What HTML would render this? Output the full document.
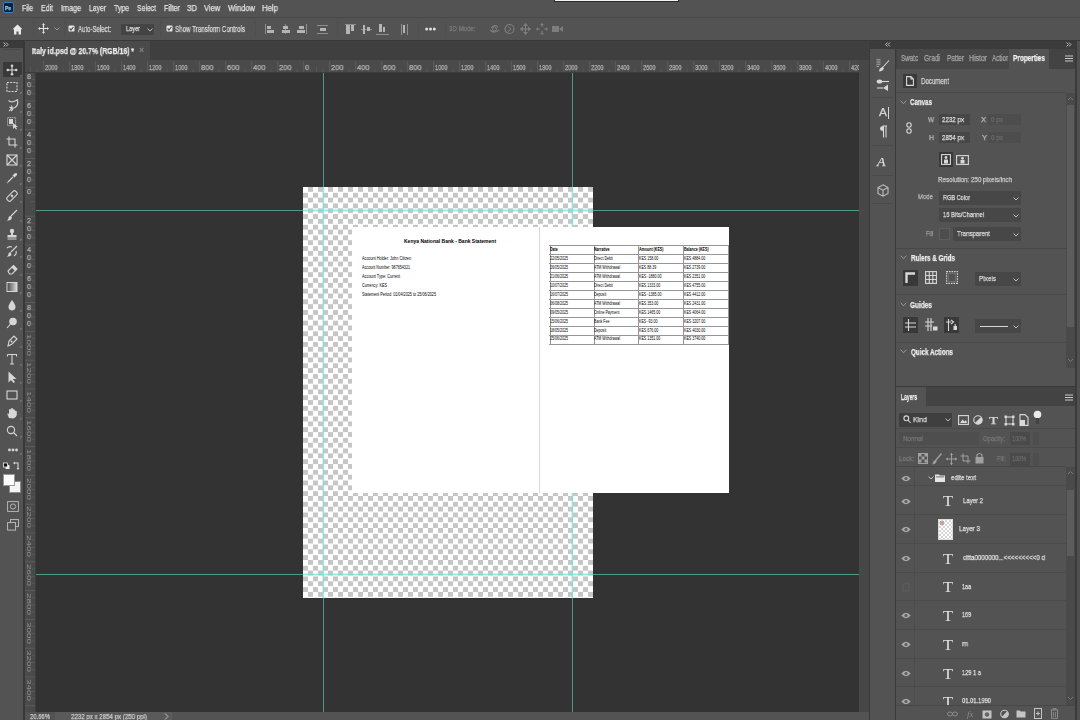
<!DOCTYPE html>
<html><head><meta charset="utf-8"><title>Photoshop</title>
<style>
*{margin:0;padding:0;box-sizing:border-box}
html,body{width:1080px;height:720px;overflow:hidden;background:#535353;font-family:"Liberation Sans",sans-serif}
.a{position:absolute}
.t{position:absolute;white-space:pre;will-change:transform;-webkit-text-stroke:0.25px currentColor}

</style></head><body>
<div class="a" style="left:0px;top:0px;width:1080px;height:17px;background:#535353;"></div>
<div class="a" style="left:0px;top:17px;width:1080px;height:1px;background:#474747;"></div>
<div class="a" style="left:3px;top:2px;width:11px;height:11px;background:#0b2235;border:1px solid #3b7fb0;border-radius:2px"></div>
<div class="t" style="left:5px;top:4.91px;font-size:6px;line-height:6px;color:#8fd0ff;font-weight:700;font-family:'Liberation Sans',sans-serif;transform:scale(0.817,1.000);transform-origin:0 0;">Ps</div>
<div class="t" style="left:22px;top:4.20px;font-size:8.5px;line-height:8.5px;color:#e2e2e2;font-weight:400;font-family:'Liberation Sans',sans-serif;transform:scale(0.803,1.000);transform-origin:0 0;">File</div>
<div class="t" style="left:41px;top:4.20px;font-size:8.5px;line-height:8.5px;color:#e2e2e2;font-weight:400;font-family:'Liberation Sans',sans-serif;transform:scale(0.819,1.000);transform-origin:0 0;">Edit</div>
<div class="t" style="left:61px;top:4.20px;font-size:8.5px;line-height:8.5px;color:#e2e2e2;font-weight:400;font-family:'Liberation Sans',sans-serif;transform:scale(0.847,1.000);transform-origin:0 0;">Image</div>
<div class="t" style="left:89px;top:4.20px;font-size:8.5px;line-height:8.5px;color:#e2e2e2;font-weight:400;font-family:'Liberation Sans',sans-serif;transform:scale(0.799,1.000);transform-origin:0 0;">Layer</div>
<div class="t" style="left:114px;top:4.20px;font-size:8.5px;line-height:8.5px;color:#e2e2e2;font-weight:400;font-family:'Liberation Sans',sans-serif;transform:scale(0.814,1.000);transform-origin:0 0;">Type</div>
<div class="t" style="left:137px;top:4.20px;font-size:8.5px;line-height:8.5px;color:#e2e2e2;font-weight:400;font-family:'Liberation Sans',sans-serif;transform:scale(0.804,1.000);transform-origin:0 0;">Select</div>
<div class="t" style="left:164px;top:4.20px;font-size:8.5px;line-height:8.5px;color:#e2e2e2;font-weight:400;font-family:'Liberation Sans',sans-serif;transform:scale(0.847,1.000);transform-origin:0 0;">Filter</div>
<div class="t" style="left:187px;top:4.20px;font-size:8.5px;line-height:8.5px;color:#e2e2e2;font-weight:400;font-family:'Liberation Sans',sans-serif;transform:scale(0.920,1.000);transform-origin:0 0;">3D</div>
<div class="t" style="left:204px;top:4.20px;font-size:8.5px;line-height:8.5px;color:#e2e2e2;font-weight:400;font-family:'Liberation Sans',sans-serif;transform:scale(0.875,1.000);transform-origin:0 0;">View</div>
<div class="t" style="left:228px;top:4.20px;font-size:8.5px;line-height:8.5px;color:#e2e2e2;font-weight:400;font-family:'Liberation Sans',sans-serif;transform:scale(0.893,1.000);transform-origin:0 0;">Window</div>
<div class="t" style="left:262px;top:4.20px;font-size:8.5px;line-height:8.5px;color:#e2e2e2;font-weight:400;font-family:'Liberation Sans',sans-serif;transform:scale(0.915,1.000);transform-origin:0 0;">Help</div>
<div class="a" style="left:554px;top:-2px;width:125px;height:4px;background:#f2f2f2;border:1px solid #2a2a2a"></div>
<div class="a" style="left:0px;top:18px;width:1080px;height:22px;background:#535353;"></div>
<div class="a" style="left:0px;top:40px;width:1080px;height:1px;background:#383838;"></div>
<svg class="a" style="left:12px;top:24px;" width="11" height="11" viewBox="0 0 11 11"><path d="M5.5 0.5 L0.5 5.2 H2 V10.5 H4.5 V7.5 H6.5 V10.5 H9 V5.2 H10.5 Z" fill="#e8e8e8"/></svg>
<div class="a" style="left:33px;top:21px;width:1px;height:16px;background:#4f4f4f;"></div>
<div class="a" style="left:64px;top:21px;width:1px;height:16px;background:#4f4f4f;"></div>
<div class="a" style="left:160px;top:21px;width:1px;height:16px;background:#4f4f4f;"></div>
<div class="a" style="left:255px;top:21px;width:1px;height:16px;background:#4f4f4f;"></div>
<div class="a" style="left:337px;top:21px;width:1px;height:16px;background:#4f4f4f;"></div>
<div class="a" style="left:418px;top:21px;width:1px;height:16px;background:#4f4f4f;"></div>
<div class="a" style="left:445px;top:21px;width:1px;height:16px;background:#4f4f4f;"></div>
<svg class="a" style="left:38px;top:23px;" width="11" height="11" viewBox="0 0 11 11"><g stroke="#e0e0e0" stroke-width="1.2" fill="#e0e0e0"><path d="M5.5 1 V10 M1 5.5 H10" fill="none"/><path d="M5.5 0 L4 2 H7Z M5.5 11 L4 9 H7Z M0 5.5 L2 4 V7Z M11 5.5 L9 4 V7Z" stroke="none"/></g></svg>
<svg class="a" style="left:54px;top:27px;" width="6" height="4" viewBox="0 0 6 4"><path d="M0.5 0.5 L3 3 L5.5 0.5" stroke="#9a9a9a" fill="none" stroke-width="1"/></svg>
<svg class="a" style="left:68px;top:25px;" width="7" height="7" viewBox="0 0 7 7"><rect x="0.5" y="0.5" width="6" height="6" rx="1" fill="#e6e6e6"/><path d="M1.6 3.5 L3 5 L5.4 2" stroke="#535353" stroke-width="1.2" fill="none"/></svg>
<div class="t" style="left:78px;top:24.70px;font-size:8.5px;line-height:8.5px;color:#dcdcdc;font-weight:400;font-family:'Liberation Sans',sans-serif;transform:scale(0.713,1.000);transform-origin:0 0;">Auto-Select:</div>
<div class="a" style="left:121px;top:24px;width:33px;height:11px;background:#444444;"></div>
<div class="t" style="left:126px;top:25.44px;font-size:8px;line-height:8px;color:#e0e0e0;font-weight:400;font-family:'Liberation Sans',sans-serif;transform:scale(0.699,1.000);transform-origin:0 0;">Layer</div>
<svg class="a" style="left:147px;top:28px;" width="6" height="4" viewBox="0 0 6 4"><path d="M0.5 0.5 L3 3 L5.5 0.5" stroke="#bdbdbd" fill="none" stroke-width="1"/></svg>
<svg class="a" style="left:166px;top:25px;" width="7" height="7" viewBox="0 0 7 7"><rect x="0.5" y="0.5" width="6" height="6" rx="1" fill="#e6e6e6"/><path d="M1.6 3.5 L3 5 L5.4 2" stroke="#535353" stroke-width="1.2" fill="none"/></svg>
<div class="t" style="left:175px;top:24.90px;font-size:8.5px;line-height:8.5px;color:#dcdcdc;font-weight:400;font-family:'Liberation Sans',sans-serif;transform:scale(0.730,1.000);transform-origin:0 0;">Show Transform Controls</div>
<div class="a" style="left:265px;top:24px;width:1px;height:10px;background:#8e8e8e;"></div>
<div class="a" style="left:266.5px;top:26px;width:4.5px;height:3px;background:#b4b4b4;"></div>
<div class="a" style="left:266.5px;top:30px;width:7px;height:2.5px;background:#b4b4b4;"></div>
<div class="a" style="left:285px;top:24px;width:1px;height:10px;background:#8e8e8e;"></div>
<div class="a" style="left:283px;top:26px;width:5px;height:3px;background:#b4b4b4;"></div>
<div class="a" style="left:282px;top:30px;width:7.5px;height:2.5px;background:#b4b4b4;"></div>
<div class="a" style="left:305.5px;top:24px;width:1px;height:10px;background:#8e8e8e;"></div>
<div class="a" style="left:299px;top:26px;width:5px;height:3px;background:#b4b4b4;"></div>
<div class="a" style="left:297px;top:30px;width:7.5px;height:2.5px;background:#b4b4b4;"></div>
<div class="a" style="left:317px;top:25px;width:11px;height:1px;background:#8e8e8e;"></div>
<div class="a" style="left:320px;top:28px;width:6px;height:3px;background:#b4b4b4;"></div>
<div class="a" style="left:317px;top:32.5px;width:11px;height:1px;background:#8e8e8e;"></div>
<div class="a" style="left:345px;top:24px;width:11px;height:1px;background:#8e8e8e;"></div>
<div class="a" style="left:346px;top:24.5px;width:3.5px;height:9.5px;background:#b4b4b4;"></div>
<div class="a" style="left:350.5px;top:24.5px;width:3px;height:6px;background:#b4b4b4;"></div>
<div class="a" style="left:361px;top:29px;width:11px;height:1px;background:#8e8e8e;"></div>
<div class="a" style="left:362.5px;top:25px;width:2.5px;height:8.5px;background:#b4b4b4;"></div>
<div class="a" style="left:366.5px;top:27px;width:3px;height:4px;background:#b4b4b4;"></div>
<div class="a" style="left:376px;top:33.5px;width:13px;height:1px;background:#8e8e8e;"></div>
<div class="a" style="left:379px;top:24px;width:2.5px;height:8px;background:#b4b4b4;"></div>
<div class="a" style="left:382.5px;top:26.5px;width:2.5px;height:5.5px;background:#b4b4b4;"></div>
<div class="a" style="left:400.5px;top:24px;width:1px;height:11px;background:#8e8e8e;"></div>
<div class="a" style="left:406.5px;top:24px;width:1px;height:11px;background:#8e8e8e;"></div>
<div class="a" style="left:402.5px;top:25px;width:2.5px;height:8px;background:#b4b4b4;"></div>
<svg class="a" style="left:425px;top:27px;" width="11" height="4" viewBox="0 0 11 4"><circle cx="1.7" cy="2" r="1.5" fill="#e0e0e0"/><circle cx="5.5" cy="2" r="1.5" fill="#e0e0e0"/><circle cx="9.3" cy="2" r="1.5" fill="#e0e0e0"/></svg>
<div class="t" style="left:449px;top:25.14px;font-size:8px;line-height:8px;color:#7e7e7e;font-weight:400;font-family:'Liberation Sans',sans-serif;transform:scale(0.764,1.000);transform-origin:0 0;">3D Mode:</div>
<svg class="a" style="left:489px;top:23px;" width="11" height="12" viewBox="0 0 11 12"><path d="M2 5 Q5 1 9 4 M1 7 Q5 11 10 7" stroke="#7d7d7d" fill="none" stroke-width="1.2"/><circle cx="5.5" cy="6" r="2" stroke="#7d7d7d" fill="none"/></svg>
<svg class="a" style="left:504px;top:23px;" width="11" height="12" viewBox="0 0 11 12"><circle cx="5.5" cy="6" r="4.5" stroke="#7d7d7d" fill="none" stroke-width="1.2"/><path d="M4 3.5 L7 6 L4 8.5" stroke="#7d7d7d" fill="none"/></svg>
<svg class="a" style="left:520px;top:23px;" width="11" height="12" viewBox="0 0 11 12"><path d="M5.5 0.5 V11.5 M0 6 H11" stroke="#7d7d7d" stroke-width="1.2"/><path d="M5.5 0 L3 3 H8Z M5.5 12 L3 9 H8Z M0 6 L3 3.5 V8.5Z M11 6 L8 3.5 V8.5Z" fill="#7d7d7d"/></svg>
<svg class="a" style="left:536px;top:23px;" width="12" height="12" viewBox="0 0 12 12"><path d="M6 2 V4 M6 8 V10 M2 6 H4 M8 6 H10" stroke="#7d7d7d" stroke-width="1.2"/><path d="M6 0 L4 2 H8Z M6 12 L4 10 H8Z M0 6 L2 4 V8Z M12 6 L10 4 V8Z" fill="#7d7d7d"/></svg>
<svg class="a" style="left:552px;top:24px;" width="12" height="10" viewBox="0 0 12 10"><rect x="0" y="2" width="7" height="6" fill="#7d7d7d"/><path d="M7 5 L11 2 V8Z" fill="#7d7d7d"/></svg>
<div class="a" style="left:23px;top:41px;width:847px;height:19px;background:#3f3f3f;"></div>
<div class="a" style="left:25px;top:41px;width:125px;height:19px;background:#4a4a4a;"></div>
<div class="t" style="left:32px;top:46.70px;font-size:8.5px;line-height:8.5px;color:#ededed;font-weight:700;font-family:'Liberation Sans',sans-serif;transform:scale(0.810,1.000);transform-origin:0 0;">Italy id.psd @ 20.7% (RGB/16) *</div>
<div class="t" style="left:139px;top:46.46px;font-size:9px;line-height:9px;color:#8a8a8a;font-weight:400;font-family:'Liberation Sans',sans-serif;transform:scale(0.950,1.000);transform-origin:0 0;">×</div>
<div class="a" style="left:25px;top:60px;width:834px;height:13px;background:#4a4a4a;"></div>
<div class="a" style="left:25px;top:73px;width:11px;height:639px;background:#4a4a4a;"></div>
<div class="a" style="left:36px;top:73px;width:823px;height:639px;background:#333333;"></div>
<div class="a" style="left:859px;top:60px;width:10px;height:652px;background:#474747;"></div>
<div class="a" style="left:869px;top:60px;width:1px;height:660px;background:#3c3c3c;"></div>
<div class="a" style="left:25px;top:712px;width:845px;height:8px;background:#535353;"></div>
<div class="a" style="left:23px;top:41px;width:2px;height:679px;background:#383838;"></div>
<div class="a" style="left:25px;top:72px;width:834px;height:1px;background:#3c3c3c;"></div>
<div class="a" style="left:35px;top:73px;width:1px;height:639px;background:#3c3c3c;"></div>
<svg class="a" style="left:25px;top:60px;" width="834" height="12" viewBox="0 0 834 12"><rect x="5.3" y="7" width="0.7" height="5" fill="#5c5c5c"/><rect x="11.8" y="9" width="0.7" height="3" fill="#5c5c5c"/><rect x="18.3" y="1" width="0.8" height="11" fill="#606060"/><rect x="24.8" y="9" width="0.7" height="3" fill="#5c5c5c"/><rect x="31.3" y="7" width="0.7" height="5" fill="#5c5c5c"/><rect x="37.8" y="9" width="0.7" height="3" fill="#5c5c5c"/><rect x="44.3" y="1" width="0.8" height="11" fill="#606060"/><rect x="50.8" y="9" width="0.7" height="3" fill="#5c5c5c"/><rect x="57.3" y="7" width="0.7" height="5" fill="#5c5c5c"/><rect x="63.8" y="9" width="0.7" height="3" fill="#5c5c5c"/><rect x="70.3" y="1" width="0.8" height="11" fill="#606060"/><rect x="76.8" y="9" width="0.7" height="3" fill="#5c5c5c"/><rect x="83.3" y="7" width="0.7" height="5" fill="#5c5c5c"/><rect x="89.8" y="9" width="0.7" height="3" fill="#5c5c5c"/><rect x="96.3" y="1" width="0.8" height="11" fill="#606060"/><rect x="102.8" y="9" width="0.7" height="3" fill="#5c5c5c"/><rect x="109.3" y="7" width="0.7" height="5" fill="#5c5c5c"/><rect x="115.8" y="9" width="0.7" height="3" fill="#5c5c5c"/><rect x="122.3" y="1" width="0.8" height="11" fill="#606060"/><rect x="128.8" y="9" width="0.7" height="3" fill="#5c5c5c"/><rect x="135.3" y="7" width="0.7" height="5" fill="#5c5c5c"/><rect x="141.8" y="9" width="0.7" height="3" fill="#5c5c5c"/><rect x="148.3" y="1" width="0.8" height="11" fill="#606060"/><rect x="154.8" y="9" width="0.7" height="3" fill="#5c5c5c"/><rect x="161.3" y="7" width="0.7" height="5" fill="#5c5c5c"/><rect x="167.8" y="9" width="0.7" height="3" fill="#5c5c5c"/><rect x="174.3" y="1" width="0.8" height="11" fill="#606060"/><rect x="180.8" y="9" width="0.7" height="3" fill="#5c5c5c"/><rect x="187.3" y="7" width="0.7" height="5" fill="#5c5c5c"/><rect x="193.8" y="9" width="0.7" height="3" fill="#5c5c5c"/><rect x="200.3" y="1" width="0.8" height="11" fill="#606060"/><rect x="206.8" y="9" width="0.7" height="3" fill="#5c5c5c"/><rect x="213.3" y="7" width="0.7" height="5" fill="#5c5c5c"/><rect x="219.8" y="9" width="0.7" height="3" fill="#5c5c5c"/><rect x="226.3" y="1" width="0.8" height="11" fill="#606060"/><rect x="232.8" y="9" width="0.7" height="3" fill="#5c5c5c"/><rect x="239.3" y="7" width="0.7" height="5" fill="#5c5c5c"/><rect x="245.8" y="9" width="0.7" height="3" fill="#5c5c5c"/><rect x="252.3" y="1" width="0.8" height="11" fill="#606060"/><rect x="258.8" y="9" width="0.7" height="3" fill="#5c5c5c"/><rect x="265.3" y="7" width="0.7" height="5" fill="#5c5c5c"/><rect x="271.8" y="9" width="0.7" height="3" fill="#5c5c5c"/><rect x="278.3" y="1" width="0.8" height="11" fill="#606060"/><rect x="284.8" y="9" width="0.7" height="3" fill="#5c5c5c"/><rect x="291.3" y="7" width="0.7" height="5" fill="#5c5c5c"/><rect x="297.8" y="9" width="0.7" height="3" fill="#5c5c5c"/><rect x="304.3" y="1" width="0.8" height="11" fill="#606060"/><rect x="310.8" y="9" width="0.7" height="3" fill="#5c5c5c"/><rect x="317.3" y="7" width="0.7" height="5" fill="#5c5c5c"/><rect x="323.8" y="9" width="0.7" height="3" fill="#5c5c5c"/><rect x="330.3" y="1" width="0.8" height="11" fill="#606060"/><rect x="336.8" y="9" width="0.7" height="3" fill="#5c5c5c"/><rect x="343.3" y="7" width="0.7" height="5" fill="#5c5c5c"/><rect x="349.8" y="9" width="0.7" height="3" fill="#5c5c5c"/><rect x="356.3" y="1" width="0.8" height="11" fill="#606060"/><rect x="362.8" y="9" width="0.7" height="3" fill="#5c5c5c"/><rect x="369.3" y="7" width="0.7" height="5" fill="#5c5c5c"/><rect x="375.8" y="9" width="0.7" height="3" fill="#5c5c5c"/><rect x="382.3" y="1" width="0.8" height="11" fill="#606060"/><rect x="388.8" y="9" width="0.7" height="3" fill="#5c5c5c"/><rect x="395.3" y="7" width="0.7" height="5" fill="#5c5c5c"/><rect x="401.8" y="9" width="0.7" height="3" fill="#5c5c5c"/><rect x="408.3" y="1" width="0.8" height="11" fill="#606060"/><rect x="414.8" y="9" width="0.7" height="3" fill="#5c5c5c"/><rect x="421.3" y="7" width="0.7" height="5" fill="#5c5c5c"/><rect x="427.8" y="9" width="0.7" height="3" fill="#5c5c5c"/><rect x="434.3" y="1" width="0.8" height="11" fill="#606060"/><rect x="440.8" y="9" width="0.7" height="3" fill="#5c5c5c"/><rect x="447.3" y="7" width="0.7" height="5" fill="#5c5c5c"/><rect x="453.8" y="9" width="0.7" height="3" fill="#5c5c5c"/><rect x="460.3" y="1" width="0.8" height="11" fill="#606060"/><rect x="466.8" y="9" width="0.7" height="3" fill="#5c5c5c"/><rect x="473.3" y="7" width="0.7" height="5" fill="#5c5c5c"/><rect x="479.8" y="9" width="0.7" height="3" fill="#5c5c5c"/><rect x="486.3" y="1" width="0.8" height="11" fill="#606060"/><rect x="492.8" y="9" width="0.7" height="3" fill="#5c5c5c"/><rect x="499.3" y="7" width="0.7" height="5" fill="#5c5c5c"/><rect x="505.8" y="9" width="0.7" height="3" fill="#5c5c5c"/><rect x="512.3" y="1" width="0.8" height="11" fill="#606060"/><rect x="518.8" y="9" width="0.7" height="3" fill="#5c5c5c"/><rect x="525.3" y="7" width="0.7" height="5" fill="#5c5c5c"/><rect x="531.8" y="9" width="0.7" height="3" fill="#5c5c5c"/><rect x="538.3" y="1" width="0.8" height="11" fill="#606060"/><rect x="544.8" y="9" width="0.7" height="3" fill="#5c5c5c"/><rect x="551.3" y="7" width="0.7" height="5" fill="#5c5c5c"/><rect x="557.8" y="9" width="0.7" height="3" fill="#5c5c5c"/><rect x="564.3" y="1" width="0.8" height="11" fill="#606060"/><rect x="570.8" y="9" width="0.7" height="3" fill="#5c5c5c"/><rect x="577.3" y="7" width="0.7" height="5" fill="#5c5c5c"/><rect x="583.8" y="9" width="0.7" height="3" fill="#5c5c5c"/><rect x="590.3" y="1" width="0.8" height="11" fill="#606060"/><rect x="596.8" y="9" width="0.7" height="3" fill="#5c5c5c"/><rect x="603.3" y="7" width="0.7" height="5" fill="#5c5c5c"/><rect x="609.8" y="9" width="0.7" height="3" fill="#5c5c5c"/><rect x="616.3" y="1" width="0.8" height="11" fill="#606060"/><rect x="622.8" y="9" width="0.7" height="3" fill="#5c5c5c"/><rect x="629.3" y="7" width="0.7" height="5" fill="#5c5c5c"/><rect x="635.8" y="9" width="0.7" height="3" fill="#5c5c5c"/><rect x="642.3" y="1" width="0.8" height="11" fill="#606060"/><rect x="648.8" y="9" width="0.7" height="3" fill="#5c5c5c"/><rect x="655.3" y="7" width="0.7" height="5" fill="#5c5c5c"/><rect x="661.8" y="9" width="0.7" height="3" fill="#5c5c5c"/><rect x="668.3" y="1" width="0.8" height="11" fill="#606060"/><rect x="674.8" y="9" width="0.7" height="3" fill="#5c5c5c"/><rect x="681.3" y="7" width="0.7" height="5" fill="#5c5c5c"/><rect x="687.8" y="9" width="0.7" height="3" fill="#5c5c5c"/><rect x="694.3" y="1" width="0.8" height="11" fill="#606060"/><rect x="700.8" y="9" width="0.7" height="3" fill="#5c5c5c"/><rect x="707.3" y="7" width="0.7" height="5" fill="#5c5c5c"/><rect x="713.8" y="9" width="0.7" height="3" fill="#5c5c5c"/><rect x="720.3" y="1" width="0.8" height="11" fill="#606060"/><rect x="726.8" y="9" width="0.7" height="3" fill="#5c5c5c"/><rect x="733.3" y="7" width="0.7" height="5" fill="#5c5c5c"/><rect x="739.8" y="9" width="0.7" height="3" fill="#5c5c5c"/><rect x="746.3" y="1" width="0.8" height="11" fill="#606060"/><rect x="752.8" y="9" width="0.7" height="3" fill="#5c5c5c"/><rect x="759.3" y="7" width="0.7" height="5" fill="#5c5c5c"/><rect x="765.8" y="9" width="0.7" height="3" fill="#5c5c5c"/><rect x="772.3" y="1" width="0.8" height="11" fill="#606060"/><rect x="778.8" y="9" width="0.7" height="3" fill="#5c5c5c"/><rect x="785.3" y="7" width="0.7" height="5" fill="#5c5c5c"/><rect x="791.8" y="9" width="0.7" height="3" fill="#5c5c5c"/><rect x="798.3" y="1" width="0.8" height="11" fill="#606060"/><rect x="804.8" y="9" width="0.7" height="3" fill="#5c5c5c"/><rect x="811.3" y="7" width="0.7" height="5" fill="#5c5c5c"/><rect x="817.8" y="9" width="0.7" height="3" fill="#5c5c5c"/><rect x="824.3" y="1" width="0.8" height="11" fill="#606060"/><rect x="830.8" y="9" width="0.7" height="3" fill="#5c5c5c"/></svg>
<div class="t" style="left:44.500000000000014px;top:63.94px;font-size:8px;line-height:8px;color:#b4b4b4;font-weight:400;font-family:'Liberation Sans',sans-serif;transform:scale(0.702,1.000);transform-origin:0 0;">2000</div>
<div class="t" style="left:70.50000000000001px;top:63.94px;font-size:8px;line-height:8px;color:#b4b4b4;font-weight:400;font-family:'Liberation Sans',sans-serif;transform:scale(0.702,1.000);transform-origin:0 0;">1800</div>
<div class="t" style="left:96.50000000000001px;top:63.94px;font-size:8px;line-height:8px;color:#b4b4b4;font-weight:400;font-family:'Liberation Sans',sans-serif;transform:scale(0.702,1.000);transform-origin:0 0;">1600</div>
<div class="t" style="left:122.50000000000001px;top:63.94px;font-size:8px;line-height:8px;color:#b4b4b4;font-weight:400;font-family:'Liberation Sans',sans-serif;transform:scale(0.702,1.000);transform-origin:0 0;">1400</div>
<div class="t" style="left:148.5px;top:63.94px;font-size:8px;line-height:8px;color:#b4b4b4;font-weight:400;font-family:'Liberation Sans',sans-serif;transform:scale(0.702,1.000);transform-origin:0 0;">1200</div>
<div class="t" style="left:174.5px;top:63.94px;font-size:8px;line-height:8px;color:#b4b4b4;font-weight:400;font-family:'Liberation Sans',sans-serif;transform:scale(0.702,1.000);transform-origin:0 0;">1000</div>
<div class="t" style="left:200.5px;top:63.94px;font-size:8px;line-height:8px;color:#b4b4b4;font-weight:400;font-family:'Liberation Sans',sans-serif;transform:scale(0.936,1.000);transform-origin:0 0;">800</div>
<div class="t" style="left:226.5px;top:63.94px;font-size:8px;line-height:8px;color:#b4b4b4;font-weight:400;font-family:'Liberation Sans',sans-serif;transform:scale(0.936,1.000);transform-origin:0 0;">600</div>
<div class="t" style="left:252.5px;top:63.94px;font-size:8px;line-height:8px;color:#b4b4b4;font-weight:400;font-family:'Liberation Sans',sans-serif;transform:scale(0.936,1.000);transform-origin:0 0;">400</div>
<div class="t" style="left:278.5px;top:63.94px;font-size:8px;line-height:8px;color:#b4b4b4;font-weight:400;font-family:'Liberation Sans',sans-serif;transform:scale(0.936,1.000);transform-origin:0 0;">200</div>
<div class="t" style="left:304.5px;top:63.94px;font-size:8px;line-height:8px;color:#b4b4b4;font-weight:400;font-family:'Liberation Sans',sans-serif;transform:scale(0.898,1.000);transform-origin:0 0;">0</div>
<div class="t" style="left:330.5px;top:63.94px;font-size:8px;line-height:8px;color:#b4b4b4;font-weight:400;font-family:'Liberation Sans',sans-serif;transform:scale(0.936,1.000);transform-origin:0 0;">200</div>
<div class="t" style="left:356.5px;top:63.94px;font-size:8px;line-height:8px;color:#b4b4b4;font-weight:400;font-family:'Liberation Sans',sans-serif;transform:scale(0.936,1.000);transform-origin:0 0;">400</div>
<div class="t" style="left:382.5px;top:63.94px;font-size:8px;line-height:8px;color:#b4b4b4;font-weight:400;font-family:'Liberation Sans',sans-serif;transform:scale(0.936,1.000);transform-origin:0 0;">600</div>
<div class="t" style="left:408.5px;top:63.94px;font-size:8px;line-height:8px;color:#b4b4b4;font-weight:400;font-family:'Liberation Sans',sans-serif;transform:scale(0.936,1.000);transform-origin:0 0;">800</div>
<div class="t" style="left:434.5px;top:63.94px;font-size:8px;line-height:8px;color:#b4b4b4;font-weight:400;font-family:'Liberation Sans',sans-serif;transform:scale(0.702,1.000);transform-origin:0 0;">1000</div>
<div class="t" style="left:460.5px;top:63.94px;font-size:8px;line-height:8px;color:#b4b4b4;font-weight:400;font-family:'Liberation Sans',sans-serif;transform:scale(0.702,1.000);transform-origin:0 0;">1200</div>
<div class="t" style="left:486.5px;top:63.94px;font-size:8px;line-height:8px;color:#b4b4b4;font-weight:400;font-family:'Liberation Sans',sans-serif;transform:scale(0.702,1.000);transform-origin:0 0;">1400</div>
<div class="t" style="left:512.5px;top:63.94px;font-size:8px;line-height:8px;color:#b4b4b4;font-weight:400;font-family:'Liberation Sans',sans-serif;transform:scale(0.702,1.000);transform-origin:0 0;">1600</div>
<div class="t" style="left:538.5px;top:63.94px;font-size:8px;line-height:8px;color:#b4b4b4;font-weight:400;font-family:'Liberation Sans',sans-serif;transform:scale(0.702,1.000);transform-origin:0 0;">1800</div>
<div class="t" style="left:564.5px;top:63.94px;font-size:8px;line-height:8px;color:#b4b4b4;font-weight:400;font-family:'Liberation Sans',sans-serif;transform:scale(0.702,1.000);transform-origin:0 0;">2000</div>
<div class="t" style="left:590.5px;top:63.94px;font-size:8px;line-height:8px;color:#b4b4b4;font-weight:400;font-family:'Liberation Sans',sans-serif;transform:scale(0.702,1.000);transform-origin:0 0;">2200</div>
<div class="t" style="left:616.5px;top:63.94px;font-size:8px;line-height:8px;color:#b4b4b4;font-weight:400;font-family:'Liberation Sans',sans-serif;transform:scale(0.702,1.000);transform-origin:0 0;">2400</div>
<div class="t" style="left:642.5px;top:63.94px;font-size:8px;line-height:8px;color:#b4b4b4;font-weight:400;font-family:'Liberation Sans',sans-serif;transform:scale(0.702,1.000);transform-origin:0 0;">2600</div>
<div class="t" style="left:668.5px;top:63.94px;font-size:8px;line-height:8px;color:#b4b4b4;font-weight:400;font-family:'Liberation Sans',sans-serif;transform:scale(0.702,1.000);transform-origin:0 0;">2800</div>
<div class="t" style="left:694.5px;top:63.94px;font-size:8px;line-height:8px;color:#b4b4b4;font-weight:400;font-family:'Liberation Sans',sans-serif;transform:scale(0.702,1.000);transform-origin:0 0;">3000</div>
<div class="t" style="left:720.5px;top:63.94px;font-size:8px;line-height:8px;color:#b4b4b4;font-weight:400;font-family:'Liberation Sans',sans-serif;transform:scale(0.702,1.000);transform-origin:0 0;">3200</div>
<div class="t" style="left:746.5px;top:63.94px;font-size:8px;line-height:8px;color:#b4b4b4;font-weight:400;font-family:'Liberation Sans',sans-serif;transform:scale(0.702,1.000);transform-origin:0 0;">3400</div>
<div class="t" style="left:772.5px;top:63.94px;font-size:8px;line-height:8px;color:#b4b4b4;font-weight:400;font-family:'Liberation Sans',sans-serif;transform:scale(0.702,1.000);transform-origin:0 0;">3600</div>
<div class="t" style="left:798.5px;top:63.94px;font-size:8px;line-height:8px;color:#b4b4b4;font-weight:400;font-family:'Liberation Sans',sans-serif;transform:scale(0.702,1.000);transform-origin:0 0;">3800</div>
<div class="t" style="left:824.5px;top:63.94px;font-size:8px;line-height:8px;color:#b4b4b4;font-weight:400;font-family:'Liberation Sans',sans-serif;transform:scale(0.702,1.000);transform-origin:0 0;">4000</div>
<div class="t" style="left:850.5px;top:63.94px;font-size:8px;line-height:8px;color:#b4b4b4;font-weight:400;font-family:'Liberation Sans',sans-serif;transform:scale(0.702,1.000);transform-origin:0 0;">4200</div>
<div class="a" style="left:859px;top:60px;width:10px;height:13px;background:#474747;"></div>
<svg class="a" style="left:25px;top:73px;" width="10" height="639" viewBox="0 0 10 639"><rect x="7" y="6.0" width="3" height="0.7" fill="#5c5c5c"/><rect x="5" y="13.2" width="5" height="0.7" fill="#5c5c5c"/><rect x="7" y="20.4" width="3" height="0.7" fill="#5c5c5c"/><rect x="0" y="27.6" width="10" height="0.8" fill="#606060"/><rect x="7" y="34.8" width="3" height="0.7" fill="#5c5c5c"/><rect x="5" y="42.0" width="5" height="0.7" fill="#5c5c5c"/><rect x="7" y="49.2" width="3" height="0.7" fill="#5c5c5c"/><rect x="0" y="56.4" width="10" height="0.8" fill="#606060"/><rect x="7" y="63.6" width="3" height="0.7" fill="#5c5c5c"/><rect x="5" y="70.8" width="5" height="0.7" fill="#5c5c5c"/><rect x="7" y="78.0" width="3" height="0.7" fill="#5c5c5c"/><rect x="0" y="85.2" width="10" height="0.8" fill="#606060"/><rect x="7" y="92.4" width="3" height="0.7" fill="#5c5c5c"/><rect x="5" y="99.6" width="5" height="0.7" fill="#5c5c5c"/><rect x="7" y="106.8" width="3" height="0.7" fill="#5c5c5c"/><rect x="0" y="114.0" width="10" height="0.8" fill="#606060"/><rect x="7" y="121.2" width="3" height="0.7" fill="#5c5c5c"/><rect x="5" y="128.4" width="5" height="0.7" fill="#5c5c5c"/><rect x="7" y="135.6" width="3" height="0.7" fill="#5c5c5c"/><rect x="0" y="142.8" width="10" height="0.8" fill="#606060"/><rect x="7" y="150.0" width="3" height="0.7" fill="#5c5c5c"/><rect x="5" y="157.2" width="5" height="0.7" fill="#5c5c5c"/><rect x="7" y="164.4" width="3" height="0.7" fill="#5c5c5c"/><rect x="0" y="171.6" width="10" height="0.8" fill="#606060"/><rect x="7" y="178.8" width="3" height="0.7" fill="#5c5c5c"/><rect x="5" y="186.0" width="5" height="0.7" fill="#5c5c5c"/><rect x="7" y="193.2" width="3" height="0.7" fill="#5c5c5c"/><rect x="0" y="200.4" width="10" height="0.8" fill="#606060"/><rect x="7" y="207.6" width="3" height="0.7" fill="#5c5c5c"/><rect x="5" y="214.8" width="5" height="0.7" fill="#5c5c5c"/><rect x="7" y="222.0" width="3" height="0.7" fill="#5c5c5c"/><rect x="0" y="229.2" width="10" height="0.8" fill="#606060"/><rect x="7" y="236.4" width="3" height="0.7" fill="#5c5c5c"/><rect x="5" y="243.6" width="5" height="0.7" fill="#5c5c5c"/><rect x="7" y="250.8" width="3" height="0.7" fill="#5c5c5c"/><rect x="0" y="258.0" width="10" height="0.8" fill="#606060"/><rect x="7" y="265.2" width="3" height="0.7" fill="#5c5c5c"/><rect x="5" y="272.4" width="5" height="0.7" fill="#5c5c5c"/><rect x="7" y="279.6" width="3" height="0.7" fill="#5c5c5c"/><rect x="0" y="286.8" width="10" height="0.8" fill="#606060"/><rect x="7" y="294.0" width="3" height="0.7" fill="#5c5c5c"/><rect x="5" y="301.2" width="5" height="0.7" fill="#5c5c5c"/><rect x="7" y="308.4" width="3" height="0.7" fill="#5c5c5c"/><rect x="0" y="315.6" width="10" height="0.8" fill="#606060"/><rect x="7" y="322.8" width="3" height="0.7" fill="#5c5c5c"/><rect x="5" y="330.0" width="5" height="0.7" fill="#5c5c5c"/><rect x="7" y="337.2" width="3" height="0.7" fill="#5c5c5c"/><rect x="0" y="344.4" width="10" height="0.8" fill="#606060"/><rect x="7" y="351.6" width="3" height="0.7" fill="#5c5c5c"/><rect x="5" y="358.8" width="5" height="0.7" fill="#5c5c5c"/><rect x="7" y="366.0" width="3" height="0.7" fill="#5c5c5c"/><rect x="0" y="373.2" width="10" height="0.8" fill="#606060"/><rect x="7" y="380.4" width="3" height="0.7" fill="#5c5c5c"/><rect x="5" y="387.6" width="5" height="0.7" fill="#5c5c5c"/><rect x="7" y="394.8" width="3" height="0.7" fill="#5c5c5c"/><rect x="0" y="402.0" width="10" height="0.8" fill="#606060"/><rect x="7" y="409.2" width="3" height="0.7" fill="#5c5c5c"/><rect x="5" y="416.4" width="5" height="0.7" fill="#5c5c5c"/><rect x="7" y="423.6" width="3" height="0.7" fill="#5c5c5c"/><rect x="0" y="430.8" width="10" height="0.8" fill="#606060"/><rect x="7" y="438.0" width="3" height="0.7" fill="#5c5c5c"/><rect x="5" y="445.2" width="5" height="0.7" fill="#5c5c5c"/><rect x="7" y="452.4" width="3" height="0.7" fill="#5c5c5c"/><rect x="0" y="459.6" width="10" height="0.8" fill="#606060"/><rect x="7" y="466.8" width="3" height="0.7" fill="#5c5c5c"/><rect x="5" y="474.0" width="5" height="0.7" fill="#5c5c5c"/><rect x="7" y="481.2" width="3" height="0.7" fill="#5c5c5c"/><rect x="0" y="488.4" width="10" height="0.8" fill="#606060"/><rect x="7" y="495.6" width="3" height="0.7" fill="#5c5c5c"/><rect x="5" y="502.8" width="5" height="0.7" fill="#5c5c5c"/><rect x="7" y="510.0" width="3" height="0.7" fill="#5c5c5c"/><rect x="0" y="517.2" width="10" height="0.8" fill="#606060"/><rect x="7" y="524.4" width="3" height="0.7" fill="#5c5c5c"/><rect x="5" y="531.6" width="5" height="0.7" fill="#5c5c5c"/><rect x="7" y="538.8" width="3" height="0.7" fill="#5c5c5c"/><rect x="0" y="546.0" width="10" height="0.8" fill="#606060"/><rect x="7" y="553.2" width="3" height="0.7" fill="#5c5c5c"/><rect x="5" y="560.4" width="5" height="0.7" fill="#5c5c5c"/><rect x="7" y="567.6" width="3" height="0.7" fill="#5c5c5c"/><rect x="0" y="574.8" width="10" height="0.8" fill="#606060"/><rect x="7" y="582.0" width="3" height="0.7" fill="#5c5c5c"/><rect x="5" y="589.2" width="5" height="0.7" fill="#5c5c5c"/><rect x="7" y="596.4" width="3" height="0.7" fill="#5c5c5c"/><rect x="0" y="603.6" width="10" height="0.8" fill="#606060"/><rect x="7" y="610.8" width="3" height="0.7" fill="#5c5c5c"/><rect x="5" y="618.0" width="5" height="0.7" fill="#5c5c5c"/><rect x="7" y="625.2" width="3" height="0.7" fill="#5c5c5c"/><rect x="0" y="632.4" width="10" height="0.8" fill="#606060"/></svg>
<div class="t" style="left:26.7px;top:73.24px;font-size:8px;line-height:8px;color:#b0b0b0;font-weight:400;font-family:'Liberation Sans',sans-serif;transform:scale(0.898,1.000);transform-origin:0 0;">8</div>
<div class="t" style="left:26.7px;top:81.24px;font-size:8px;line-height:8px;color:#b0b0b0;font-weight:400;font-family:'Liberation Sans',sans-serif;transform:scale(0.898,1.000);transform-origin:0 0;">0</div>
<div class="t" style="left:26.7px;top:89.24px;font-size:8px;line-height:8px;color:#b0b0b0;font-weight:400;font-family:'Liberation Sans',sans-serif;transform:scale(0.898,1.000);transform-origin:0 0;">0</div>
<div class="t" style="left:26.7px;top:102.04px;font-size:8px;line-height:8px;color:#b0b0b0;font-weight:400;font-family:'Liberation Sans',sans-serif;transform:scale(0.898,1.000);transform-origin:0 0;">6</div>
<div class="t" style="left:26.7px;top:110.04px;font-size:8px;line-height:8px;color:#b0b0b0;font-weight:400;font-family:'Liberation Sans',sans-serif;transform:scale(0.898,1.000);transform-origin:0 0;">0</div>
<div class="t" style="left:26.7px;top:118.04px;font-size:8px;line-height:8px;color:#b0b0b0;font-weight:400;font-family:'Liberation Sans',sans-serif;transform:scale(0.898,1.000);transform-origin:0 0;">0</div>
<div class="t" style="left:26.7px;top:130.84px;font-size:8px;line-height:8px;color:#b0b0b0;font-weight:400;font-family:'Liberation Sans',sans-serif;transform:scale(0.898,1.000);transform-origin:0 0;">4</div>
<div class="t" style="left:26.7px;top:138.84px;font-size:8px;line-height:8px;color:#b0b0b0;font-weight:400;font-family:'Liberation Sans',sans-serif;transform:scale(0.898,1.000);transform-origin:0 0;">0</div>
<div class="t" style="left:26.7px;top:146.84px;font-size:8px;line-height:8px;color:#b0b0b0;font-weight:400;font-family:'Liberation Sans',sans-serif;transform:scale(0.898,1.000);transform-origin:0 0;">0</div>
<div class="t" style="left:26.7px;top:159.64px;font-size:8px;line-height:8px;color:#b0b0b0;font-weight:400;font-family:'Liberation Sans',sans-serif;transform:scale(0.898,1.000);transform-origin:0 0;">2</div>
<div class="t" style="left:26.7px;top:167.64px;font-size:8px;line-height:8px;color:#b0b0b0;font-weight:400;font-family:'Liberation Sans',sans-serif;transform:scale(0.898,1.000);transform-origin:0 0;">0</div>
<div class="t" style="left:26.7px;top:175.64px;font-size:8px;line-height:8px;color:#b0b0b0;font-weight:400;font-family:'Liberation Sans',sans-serif;transform:scale(0.898,1.000);transform-origin:0 0;">0</div>
<div class="t" style="left:26.7px;top:188.44px;font-size:8px;line-height:8px;color:#b0b0b0;font-weight:400;font-family:'Liberation Sans',sans-serif;transform:scale(0.898,1.000);transform-origin:0 0;">0</div>
<div class="t" style="left:26.7px;top:217.24px;font-size:8px;line-height:8px;color:#b0b0b0;font-weight:400;font-family:'Liberation Sans',sans-serif;transform:scale(0.898,1.000);transform-origin:0 0;">2</div>
<div class="t" style="left:26.7px;top:225.24px;font-size:8px;line-height:8px;color:#b0b0b0;font-weight:400;font-family:'Liberation Sans',sans-serif;transform:scale(0.898,1.000);transform-origin:0 0;">0</div>
<div class="t" style="left:26.7px;top:233.24px;font-size:8px;line-height:8px;color:#b0b0b0;font-weight:400;font-family:'Liberation Sans',sans-serif;transform:scale(0.898,1.000);transform-origin:0 0;">0</div>
<div class="t" style="left:26.7px;top:246.04px;font-size:8px;line-height:8px;color:#b0b0b0;font-weight:400;font-family:'Liberation Sans',sans-serif;transform:scale(0.898,1.000);transform-origin:0 0;">4</div>
<div class="t" style="left:26.7px;top:254.04px;font-size:8px;line-height:8px;color:#b0b0b0;font-weight:400;font-family:'Liberation Sans',sans-serif;transform:scale(0.898,1.000);transform-origin:0 0;">0</div>
<div class="t" style="left:26.7px;top:262.04px;font-size:8px;line-height:8px;color:#b0b0b0;font-weight:400;font-family:'Liberation Sans',sans-serif;transform:scale(0.898,1.000);transform-origin:0 0;">0</div>
<div class="t" style="left:26.7px;top:274.84px;font-size:8px;line-height:8px;color:#b0b0b0;font-weight:400;font-family:'Liberation Sans',sans-serif;transform:scale(0.898,1.000);transform-origin:0 0;">6</div>
<div class="t" style="left:26.7px;top:282.84px;font-size:8px;line-height:8px;color:#b0b0b0;font-weight:400;font-family:'Liberation Sans',sans-serif;transform:scale(0.898,1.000);transform-origin:0 0;">0</div>
<div class="t" style="left:26.7px;top:290.84px;font-size:8px;line-height:8px;color:#b0b0b0;font-weight:400;font-family:'Liberation Sans',sans-serif;transform:scale(0.898,1.000);transform-origin:0 0;">0</div>
<div class="t" style="left:26.7px;top:303.64px;font-size:8px;line-height:8px;color:#b0b0b0;font-weight:400;font-family:'Liberation Sans',sans-serif;transform:scale(0.898,1.000);transform-origin:0 0;">8</div>
<div class="t" style="left:26.7px;top:311.64px;font-size:8px;line-height:8px;color:#b0b0b0;font-weight:400;font-family:'Liberation Sans',sans-serif;transform:scale(0.898,1.000);transform-origin:0 0;">0</div>
<div class="t" style="left:26.7px;top:319.64px;font-size:8px;line-height:8px;color:#b0b0b0;font-weight:400;font-family:'Liberation Sans',sans-serif;transform:scale(0.898,1.000);transform-origin:0 0;">0</div>
<div class="t" style="left:31.0px;top:333.5px;font-size:5.2px;line-height:5.2px;color:#8e8e8e;-webkit-text-stroke:0;transform-origin:0 0;transform:rotate(90deg) scaleX(1.9)">1000</div>
<div class="t" style="left:31.0px;top:362.3px;font-size:5.2px;line-height:5.2px;color:#8e8e8e;-webkit-text-stroke:0;transform-origin:0 0;transform:rotate(90deg) scaleX(1.9)">1200</div>
<div class="t" style="left:31.0px;top:391.1px;font-size:5.2px;line-height:5.2px;color:#8e8e8e;-webkit-text-stroke:0;transform-origin:0 0;transform:rotate(90deg) scaleX(1.9)">1400</div>
<div class="t" style="left:31.0px;top:419.9px;font-size:5.2px;line-height:5.2px;color:#8e8e8e;-webkit-text-stroke:0;transform-origin:0 0;transform:rotate(90deg) scaleX(1.9)">1600</div>
<div class="t" style="left:31.0px;top:448.7px;font-size:5.2px;line-height:5.2px;color:#8e8e8e;-webkit-text-stroke:0;transform-origin:0 0;transform:rotate(90deg) scaleX(1.9)">1800</div>
<div class="t" style="left:31.0px;top:477.5px;font-size:5.2px;line-height:5.2px;color:#8e8e8e;-webkit-text-stroke:0;transform-origin:0 0;transform:rotate(90deg) scaleX(1.9)">2000</div>
<div class="t" style="left:31.0px;top:506.3px;font-size:5.2px;line-height:5.2px;color:#8e8e8e;-webkit-text-stroke:0;transform-origin:0 0;transform:rotate(90deg) scaleX(1.9)">2200</div>
<div class="t" style="left:31.0px;top:535.1px;font-size:5.2px;line-height:5.2px;color:#8e8e8e;-webkit-text-stroke:0;transform-origin:0 0;transform:rotate(90deg) scaleX(1.9)">2400</div>
<div class="t" style="left:31.0px;top:563.9px;font-size:5.2px;line-height:5.2px;color:#8e8e8e;-webkit-text-stroke:0;transform-origin:0 0;transform:rotate(90deg) scaleX(1.9)">2600</div>
<div class="t" style="left:31.0px;top:592.7px;font-size:5.2px;line-height:5.2px;color:#8e8e8e;-webkit-text-stroke:0;transform-origin:0 0;transform:rotate(90deg) scaleX(1.9)">2800</div>
<div class="t" style="left:31.0px;top:621.5px;font-size:5.2px;line-height:5.2px;color:#8e8e8e;-webkit-text-stroke:0;transform-origin:0 0;transform:rotate(90deg) scaleX(1.9)">3000</div>
<div class="t" style="left:31.0px;top:650.3px;font-size:5.2px;line-height:5.2px;color:#8e8e8e;-webkit-text-stroke:0;transform-origin:0 0;transform:rotate(90deg) scaleX(1.9)">3200</div>
<div class="t" style="left:31.0px;top:679.1px;font-size:5.2px;line-height:5.2px;color:#8e8e8e;-webkit-text-stroke:0;transform-origin:0 0;transform:rotate(90deg) scaleX(1.9)">3400</div>
<div class="a" style="left:303px;top:187px;width:290px;height:411px;background:conic-gradient(#c6c6c6 0 25%,#fff 0 50%,#c6c6c6 0 75%,#fff 0) 0 0/10px 10.66px"></div>
<div class="a" style="left:322.6px;top:73px;width:1.3px;height:639px;background:rgba(95,220,205,0.6);"></div>
<div class="a" style="left:571.6px;top:73px;width:1.3px;height:639px;background:rgba(95,220,205,0.6);"></div>
<div class="a" style="left:36px;top:210.1px;width:823px;height:1.3px;background:rgba(95,220,205,0.6);"></div>
<div class="a" style="left:36px;top:573.7px;width:823px;height:1.3px;background:rgba(95,220,205,0.6);"></div>
<div class="a" style="left:303px;top:209.4px;width:290px;height:2.6px;background:rgba(120,235,225,0.35);"></div>
<div class="a" style="left:303px;top:573.0px;width:290px;height:2.6px;background:rgba(120,235,225,0.35);"></div>
<div class="a" style="left:321.9px;top:187px;width:2.6px;height:411px;background:rgba(120,235,225,0.35);"></div>
<div class="a" style="left:570.9px;top:187px;width:2.6px;height:411px;background:rgba(120,235,225,0.35);"></div>
<div class="a" style="left:352px;top:227px;width:377px;height:266px;background:#ffffff;"></div>
<div class="a" style="left:539px;top:227px;width:1px;height:266px;background:#d9d9d9;"></div>
<div class="t" style="left:404px;top:238.03px;font-size:11px;line-height:11px;color:#000;font-weight:700;font-family:'Liberation Sans',sans-serif;transform:scale(0.455,0.560);transform-origin:0 0;-webkit-text-stroke:0;will-change:auto;">Kenya National Bank - Bank Statement</div>
<div class="t" style="left:362px;top:256.19px;font-size:5px;line-height:5px;color:#000;font-weight:400;font-family:'Liberation Sans',sans-serif;transform:scale(0.760,1.000);transform-origin:0 0;-webkit-text-stroke:0;will-change:auto;">Account Holder: John Citizen</div>
<div class="t" style="left:362px;top:265.04px;font-size:5px;line-height:5px;color:#000;font-weight:400;font-family:'Liberation Sans',sans-serif;transform:scale(0.738,1.000);transform-origin:0 0;-webkit-text-stroke:0;will-change:auto;">Account Number: 987654321</div>
<div class="t" style="left:362px;top:273.89px;font-size:5px;line-height:5px;color:#000;font-weight:400;font-family:'Liberation Sans',sans-serif;transform:scale(0.765,1.000);transform-origin:0 0;-webkit-text-stroke:0;will-change:auto;">Account Type: Current</div>
<div class="t" style="left:362px;top:282.74px;font-size:5px;line-height:5px;color:#000;font-weight:400;font-family:'Liberation Sans',sans-serif;transform:scale(0.756,1.000);transform-origin:0 0;-webkit-text-stroke:0;will-change:auto;">Currency: KES</div>
<div class="t" style="left:362px;top:291.59px;font-size:5px;line-height:5px;color:#000;font-weight:400;font-family:'Liberation Sans',sans-serif;transform:scale(0.752,1.000);transform-origin:0 0;-webkit-text-stroke:0;will-change:auto;">Statement Period: 01/04/2025 to 25/06/2025</div>
<svg class="a" style="left:549px;top:245px;" width="181" height="100" viewBox="0 0 181 100"><rect x="0" y="0" width="180" height="1" fill="#969696"/><rect x="0" y="9" width="180" height="1" fill="#969696"/><rect x="0" y="18" width="180" height="1" fill="#969696"/><rect x="0" y="27" width="180" height="1" fill="#969696"/><rect x="0" y="36" width="180" height="1" fill="#969696"/><rect x="0" y="45" width="180" height="1" fill="#969696"/><rect x="0" y="54" width="180" height="1" fill="#969696"/><rect x="0" y="63" width="180" height="1" fill="#969696"/><rect x="0" y="72" width="180" height="1" fill="#969696"/><rect x="0" y="81" width="180" height="1" fill="#969696"/><rect x="0" y="90" width="180" height="1" fill="#969696"/><rect x="0" y="99" width="180" height="1" fill="#969696"/><rect x="1" y="0" width="1" height="99" fill="#969696"/><rect x="45" y="0" width="1" height="99" fill="#969696"/><rect x="89" y="0" width="1" height="99" fill="#969696"/><rect x="134" y="0" width="1" height="99" fill="#969696"/><rect x="179" y="0" width="1" height="99" fill="#969696"/></svg>
<div class="t" style="left:550.3px;top:248.15px;font-size:4.8px;line-height:4.8px;color:#000;font-weight:700;font-family:'Liberation Sans',sans-serif;transform:scale(0.750,1.000);transform-origin:0 0;-webkit-text-stroke:0;will-change:auto;">Date</div>
<div class="t" style="left:594.4px;top:248.15px;font-size:4.8px;line-height:4.8px;color:#000;font-weight:700;font-family:'Liberation Sans',sans-serif;transform:scale(0.750,1.000);transform-origin:0 0;-webkit-text-stroke:0;will-change:auto;">Narrative</div>
<div class="t" style="left:639.1999999999999px;top:248.15px;font-size:4.8px;line-height:4.8px;color:#000;font-weight:700;font-family:'Liberation Sans',sans-serif;transform:scale(0.750,1.000);transform-origin:0 0;-webkit-text-stroke:0;will-change:auto;">Amount (KES)</div>
<div class="t" style="left:683.5px;top:248.15px;font-size:4.8px;line-height:4.8px;color:#000;font-weight:700;font-family:'Liberation Sans',sans-serif;transform:scale(0.750,1.000);transform-origin:0 0;-webkit-text-stroke:0;will-change:auto;">Balance (KES)</div>
<div class="t" style="left:550.3px;top:257.08px;font-size:4.8px;line-height:4.8px;color:#000;font-weight:400;font-family:'Liberation Sans',sans-serif;transform:scale(0.750,1.000);transform-origin:0 0;-webkit-text-stroke:0;will-change:auto;">22/05/2025</div>
<div class="t" style="left:594.4px;top:257.08px;font-size:4.8px;line-height:4.8px;color:#000;font-weight:400;font-family:'Liberation Sans',sans-serif;transform:scale(0.750,1.000);transform-origin:0 0;-webkit-text-stroke:0;will-change:auto;">Direct Debit</div>
<div class="t" style="left:639.1999999999999px;top:257.08px;font-size:4.8px;line-height:4.8px;color:#000;font-weight:400;font-family:'Liberation Sans',sans-serif;transform:scale(0.750,1.000);transform-origin:0 0;-webkit-text-stroke:0;will-change:auto;">KES 158.00</div>
<div class="t" style="left:683.5px;top:257.08px;font-size:4.8px;line-height:4.8px;color:#000;font-weight:400;font-family:'Liberation Sans',sans-serif;transform:scale(0.750,1.000);transform-origin:0 0;-webkit-text-stroke:0;will-change:auto;">KES 4884.00</div>
<div class="t" style="left:550.3px;top:266.01px;font-size:4.8px;line-height:4.8px;color:#000;font-weight:400;font-family:'Liberation Sans',sans-serif;transform:scale(0.750,1.000);transform-origin:0 0;-webkit-text-stroke:0;will-change:auto;">26/05/2025</div>
<div class="t" style="left:594.4px;top:266.01px;font-size:4.8px;line-height:4.8px;color:#000;font-weight:400;font-family:'Liberation Sans',sans-serif;transform:scale(0.750,1.000);transform-origin:0 0;-webkit-text-stroke:0;will-change:auto;">ATM Withdrawal</div>
<div class="t" style="left:639.1999999999999px;top:266.01px;font-size:4.8px;line-height:4.8px;color:#000;font-weight:400;font-family:'Liberation Sans',sans-serif;transform:scale(0.750,1.000);transform-origin:0 0;-webkit-text-stroke:0;will-change:auto;">KES 88.39</div>
<div class="t" style="left:683.5px;top:266.01px;font-size:4.8px;line-height:4.8px;color:#000;font-weight:400;font-family:'Liberation Sans',sans-serif;transform:scale(0.750,1.000);transform-origin:0 0;-webkit-text-stroke:0;will-change:auto;">KES 2739.00</div>
<div class="t" style="left:550.3px;top:274.94px;font-size:4.8px;line-height:4.8px;color:#000;font-weight:400;font-family:'Liberation Sans',sans-serif;transform:scale(0.750,1.000);transform-origin:0 0;-webkit-text-stroke:0;will-change:auto;">21/06/2025</div>
<div class="t" style="left:594.4px;top:274.94px;font-size:4.8px;line-height:4.8px;color:#000;font-weight:400;font-family:'Liberation Sans',sans-serif;transform:scale(0.750,1.000);transform-origin:0 0;-webkit-text-stroke:0;will-change:auto;">ATM Withdrawal</div>
<div class="t" style="left:639.1999999999999px;top:274.94px;font-size:4.8px;line-height:4.8px;color:#000;font-weight:400;font-family:'Liberation Sans',sans-serif;transform:scale(0.750,1.000);transform-origin:0 0;-webkit-text-stroke:0;will-change:auto;">KES -1880.00</div>
<div class="t" style="left:683.5px;top:274.94px;font-size:4.8px;line-height:4.8px;color:#000;font-weight:400;font-family:'Liberation Sans',sans-serif;transform:scale(0.750,1.000);transform-origin:0 0;-webkit-text-stroke:0;will-change:auto;">KES 2351.00</div>
<div class="t" style="left:550.3px;top:283.87px;font-size:4.8px;line-height:4.8px;color:#000;font-weight:400;font-family:'Liberation Sans',sans-serif;transform:scale(0.750,1.000);transform-origin:0 0;-webkit-text-stroke:0;will-change:auto;">10/07/2025</div>
<div class="t" style="left:594.4px;top:283.87px;font-size:4.8px;line-height:4.8px;color:#000;font-weight:400;font-family:'Liberation Sans',sans-serif;transform:scale(0.750,1.000);transform-origin:0 0;-webkit-text-stroke:0;will-change:auto;">Direct Debit</div>
<div class="t" style="left:639.1999999999999px;top:283.87px;font-size:4.8px;line-height:4.8px;color:#000;font-weight:400;font-family:'Liberation Sans',sans-serif;transform:scale(0.750,1.000);transform-origin:0 0;-webkit-text-stroke:0;will-change:auto;">KES 1333.00</div>
<div class="t" style="left:683.5px;top:283.87px;font-size:4.8px;line-height:4.8px;color:#000;font-weight:400;font-family:'Liberation Sans',sans-serif;transform:scale(0.750,1.000);transform-origin:0 0;-webkit-text-stroke:0;will-change:auto;">KES 4755.00</div>
<div class="t" style="left:550.3px;top:292.80px;font-size:4.8px;line-height:4.8px;color:#000;font-weight:400;font-family:'Liberation Sans',sans-serif;transform:scale(0.750,1.000);transform-origin:0 0;-webkit-text-stroke:0;will-change:auto;">16/07/2025</div>
<div class="t" style="left:594.4px;top:292.80px;font-size:4.8px;line-height:4.8px;color:#000;font-weight:400;font-family:'Liberation Sans',sans-serif;transform:scale(0.750,1.000);transform-origin:0 0;-webkit-text-stroke:0;will-change:auto;">Deposit</div>
<div class="t" style="left:639.1999999999999px;top:292.80px;font-size:4.8px;line-height:4.8px;color:#000;font-weight:400;font-family:'Liberation Sans',sans-serif;transform:scale(0.750,1.000);transform-origin:0 0;-webkit-text-stroke:0;will-change:auto;">KES -1385.00</div>
<div class="t" style="left:683.5px;top:292.80px;font-size:4.8px;line-height:4.8px;color:#000;font-weight:400;font-family:'Liberation Sans',sans-serif;transform:scale(0.750,1.000);transform-origin:0 0;-webkit-text-stroke:0;will-change:auto;">KES 4412.00</div>
<div class="t" style="left:550.3px;top:301.73px;font-size:4.8px;line-height:4.8px;color:#000;font-weight:400;font-family:'Liberation Sans',sans-serif;transform:scale(0.750,1.000);transform-origin:0 0;-webkit-text-stroke:0;will-change:auto;">06/08/2025</div>
<div class="t" style="left:594.4px;top:301.73px;font-size:4.8px;line-height:4.8px;color:#000;font-weight:400;font-family:'Liberation Sans',sans-serif;transform:scale(0.750,1.000);transform-origin:0 0;-webkit-text-stroke:0;will-change:auto;">ATM Withdrawal</div>
<div class="t" style="left:639.1999999999999px;top:301.73px;font-size:4.8px;line-height:4.8px;color:#000;font-weight:400;font-family:'Liberation Sans',sans-serif;transform:scale(0.750,1.000);transform-origin:0 0;-webkit-text-stroke:0;will-change:auto;">KES 353.00</div>
<div class="t" style="left:683.5px;top:301.73px;font-size:4.8px;line-height:4.8px;color:#000;font-weight:400;font-family:'Liberation Sans',sans-serif;transform:scale(0.750,1.000);transform-origin:0 0;-webkit-text-stroke:0;will-change:auto;">KES 2431.00</div>
<div class="t" style="left:550.3px;top:310.66px;font-size:4.8px;line-height:4.8px;color:#000;font-weight:400;font-family:'Liberation Sans',sans-serif;transform:scale(0.750,1.000);transform-origin:0 0;-webkit-text-stroke:0;will-change:auto;">09/05/2025</div>
<div class="t" style="left:594.4px;top:310.66px;font-size:4.8px;line-height:4.8px;color:#000;font-weight:400;font-family:'Liberation Sans',sans-serif;transform:scale(0.750,1.000);transform-origin:0 0;-webkit-text-stroke:0;will-change:auto;">Online Payment</div>
<div class="t" style="left:639.1999999999999px;top:310.66px;font-size:4.8px;line-height:4.8px;color:#000;font-weight:400;font-family:'Liberation Sans',sans-serif;transform:scale(0.750,1.000);transform-origin:0 0;-webkit-text-stroke:0;will-change:auto;">KES 1465.00</div>
<div class="t" style="left:683.5px;top:310.66px;font-size:4.8px;line-height:4.8px;color:#000;font-weight:400;font-family:'Liberation Sans',sans-serif;transform:scale(0.750,1.000);transform-origin:0 0;-webkit-text-stroke:0;will-change:auto;">KES 4064.00</div>
<div class="t" style="left:550.3px;top:319.59px;font-size:4.8px;line-height:4.8px;color:#000;font-weight:400;font-family:'Liberation Sans',sans-serif;transform:scale(0.750,1.000);transform-origin:0 0;-webkit-text-stroke:0;will-change:auto;">15/06/2025</div>
<div class="t" style="left:594.4px;top:319.59px;font-size:4.8px;line-height:4.8px;color:#000;font-weight:400;font-family:'Liberation Sans',sans-serif;transform:scale(0.750,1.000);transform-origin:0 0;-webkit-text-stroke:0;will-change:auto;">Bank Fee</div>
<div class="t" style="left:639.1999999999999px;top:319.59px;font-size:4.8px;line-height:4.8px;color:#000;font-weight:400;font-family:'Liberation Sans',sans-serif;transform:scale(0.750,1.000);transform-origin:0 0;-webkit-text-stroke:0;will-change:auto;">KES -93.00</div>
<div class="t" style="left:683.5px;top:319.59px;font-size:4.8px;line-height:4.8px;color:#000;font-weight:400;font-family:'Liberation Sans',sans-serif;transform:scale(0.750,1.000);transform-origin:0 0;-webkit-text-stroke:0;will-change:auto;">KES 3207.00</div>
<div class="t" style="left:550.3px;top:328.52px;font-size:4.8px;line-height:4.8px;color:#000;font-weight:400;font-family:'Liberation Sans',sans-serif;transform:scale(0.750,1.000);transform-origin:0 0;-webkit-text-stroke:0;will-change:auto;">18/05/2025</div>
<div class="t" style="left:594.4px;top:328.52px;font-size:4.8px;line-height:4.8px;color:#000;font-weight:400;font-family:'Liberation Sans',sans-serif;transform:scale(0.750,1.000);transform-origin:0 0;-webkit-text-stroke:0;will-change:auto;">Deposit</div>
<div class="t" style="left:639.1999999999999px;top:328.52px;font-size:4.8px;line-height:4.8px;color:#000;font-weight:400;font-family:'Liberation Sans',sans-serif;transform:scale(0.750,1.000);transform-origin:0 0;-webkit-text-stroke:0;will-change:auto;">KES 676.00</div>
<div class="t" style="left:683.5px;top:328.52px;font-size:4.8px;line-height:4.8px;color:#000;font-weight:400;font-family:'Liberation Sans',sans-serif;transform:scale(0.750,1.000);transform-origin:0 0;-webkit-text-stroke:0;will-change:auto;">KES 4030.00</div>
<div class="t" style="left:550.3px;top:337.45px;font-size:4.8px;line-height:4.8px;color:#000;font-weight:400;font-family:'Liberation Sans',sans-serif;transform:scale(0.750,1.000);transform-origin:0 0;-webkit-text-stroke:0;will-change:auto;">25/06/2025</div>
<div class="t" style="left:594.4px;top:337.45px;font-size:4.8px;line-height:4.8px;color:#000;font-weight:400;font-family:'Liberation Sans',sans-serif;transform:scale(0.750,1.000);transform-origin:0 0;-webkit-text-stroke:0;will-change:auto;">ATM Withdrawal</div>
<div class="t" style="left:639.1999999999999px;top:337.45px;font-size:4.8px;line-height:4.8px;color:#000;font-weight:400;font-family:'Liberation Sans',sans-serif;transform:scale(0.750,1.000);transform-origin:0 0;-webkit-text-stroke:0;will-change:auto;">KES 1351.00</div>
<div class="t" style="left:683.5px;top:337.45px;font-size:4.8px;line-height:4.8px;color:#000;font-weight:400;font-family:'Liberation Sans',sans-serif;transform:scale(0.750,1.000);transform-origin:0 0;-webkit-text-stroke:0;will-change:auto;">KES 3740.00</div>
<div class="t" style="left:30px;top:712.88px;font-size:7.5px;line-height:7.5px;color:#cfcfcf;font-weight:400;font-family:'Liberation Sans',sans-serif;transform:scale(0.786,1.000);transform-origin:0 0;">20.66%</div>
<div class="a" style="left:55px;top:712px;width:117px;height:8px;background:#5a5a5a;"></div>
<div class="t" style="left:71px;top:712.88px;font-size:7.5px;line-height:7.5px;color:#cfcfcf;font-weight:400;font-family:'Liberation Sans',sans-serif;transform:scale(0.817,1.000);transform-origin:0 0;">2232 px x 2854 px (250 ppi)</div>
<svg class="a" style="left:164px;top:713px;" width="5" height="7" viewBox="0 0 5 7"><path d="M1 0.5 L4 3.5 L1 6.5" stroke="#bbb" fill="none"/></svg>
<div class="a" style="left:0px;top:41px;width:23px;height:679px;background:#535353;"></div>
<div class="a" style="left:0px;top:41px;width:23px;height:7px;background:#3b3b3b;"></div>
<svg class="a" style="left:3px;top:42px;" width="6" height="5" viewBox="0 0 6 5"><path d="M0.5 0.5 L2.5 2.5 L0.5 4.5 M3 0.5 L5 2.5 L3 4.5" stroke="#bdbdbd" fill="none" stroke-width="1"/></svg>
<div class="a" style="left:3px;top:49px;width:17px;height:1px;background:#4a4a4a;"></div>
<div class="a" style="left:3px;top:62px;width:19px;height:15px;background:#393939;"></div>
<svg class="a" style="left:6.0px;top:63.5px;" width="12" height="12" viewBox="0 0 12 12"><path d="M6 1.5 V10.5 M1.5 6 H10.5" stroke="#d6d6d6" fill="none" stroke-width="1.1"/><circle cx="6" cy="1.8" r="1.3" fill="#d6d6d6"/><circle cx="6" cy="10.2" r="1.3" fill="#d6d6d6"/><circle cx="1.8" cy="6" r="1.3" fill="#d6d6d6"/><circle cx="10.2" cy="6" r="1.3" fill="#d6d6d6"/></svg>
<svg class="a" style="left:19px;top:73.5px;" width="3" height="3" viewBox="0 0 3 3"><path d="M2.5 0.5 V2.5 H0.5Z" fill="#8a8a8a"/></svg>
<svg class="a" style="left:6.0px;top:81.0px;" width="12" height="12" viewBox="0 0 12 12"><rect x="1" y="1.5" width="10" height="9" stroke="#d6d6d6" fill="none" stroke-width="1.1" stroke-dasharray="2 1.2"/></svg>
<svg class="a" style="left:19px;top:91px;" width="3" height="3" viewBox="0 0 3 3"><path d="M2.5 0.5 V2.5 H0.5Z" fill="#8a8a8a"/></svg>
<svg class="a" style="left:6.800000000000001px;top:99.0px;" width="12" height="13" viewBox="0 0 12 13"><path d="M1.5 1.5 Q5 4.5 10.5 0.8 Q11.5 6.5 8 8.5 Q5 10 2.5 8 M4.5 6.5 Q6 9 2 12 M6 9 Q5.5 11 4 12" stroke="#d6d6d6" fill="none" stroke-width="1.1" stroke-width="1.2"/></svg>
<svg class="a" style="left:19px;top:109.5px;" width="3" height="3" viewBox="0 0 3 3"><path d="M2.5 0.5 V2.5 H0.5Z" fill="#8a8a8a"/></svg>
<svg class="a" style="left:7.300000000000001px;top:117.0px;" width="12" height="13" viewBox="0 0 12 13"><rect x="0.6" y="0.6" width="8" height="8" stroke="#d6d6d6" fill="none" stroke-width="0.8" stroke-dasharray="1.2 0.8"/><rect x="2" y="2" width="4" height="5" fill="#d6d6d6"/><path d="M6 6 L6 12 L7.6 10.5 L9 12.6 L10 12 L8.8 10 L11 10Z" fill="#d6d6d6"/></svg>
<svg class="a" style="left:19px;top:127.5px;" width="3" height="3" viewBox="0 0 3 3"><path d="M2.5 0.5 V2.5 H0.5Z" fill="#8a8a8a"/></svg>
<svg class="a" style="left:6.0px;top:135.5px;" width="12" height="12" viewBox="0 0 12 12"><path d="M3 0.5 V9 H11.5 M0.5 3 H9 V11.5" stroke="#d6d6d6" fill="none" stroke-width="1.1" stroke-width="1.4"/></svg>
<svg class="a" style="left:19px;top:145.5px;" width="3" height="3" viewBox="0 0 3 3"><path d="M2.5 0.5 V2.5 H0.5Z" fill="#8a8a8a"/></svg>
<svg class="a" style="left:6.0px;top:153.5px;" width="12" height="12" viewBox="0 0 12 12"><rect x="1" y="1" width="10" height="10" stroke="#d6d6d6" fill="none" stroke-width="1.1"/><path d="M1 1 L11 11 M11 1 L1 11" stroke="#d6d6d6" fill="none" stroke-width="1.1"/></svg>
<svg class="a" style="left:19px;top:163.5px;" width="3" height="3" viewBox="0 0 3 3"><path d="M2.5 0.5 V2.5 H0.5Z" fill="#8a8a8a"/></svg>
<svg class="a" style="left:6.0px;top:171.5px;" width="12" height="12" viewBox="0 0 12 12"><path d="M2 10 L7 5" stroke="#d6d6d6" fill="none" stroke-width="1.1" stroke-width="1.6"/><path d="M6.5 3.5 L8.5 1.5 Q10 0.5 11 1.5 Q11.5 3 10.5 3.5 L8.5 5.5Z" fill="#d6d6d6"/><path d="M1.5 10.5 L1 11" stroke="#d6d6d6" fill="none" stroke-width="1.1"/></svg>
<svg class="a" style="left:19px;top:181.5px;" width="3" height="3" viewBox="0 0 3 3"><path d="M2.5 0.5 V2.5 H0.5Z" fill="#8a8a8a"/></svg>
<svg class="a" style="left:6.0px;top:189.5px;" width="12" height="12" viewBox="0 0 12 12"><rect x="3.5" y="0" width="5" height="12" rx="2" transform="rotate(45 6 6)" stroke="#d6d6d6" fill="none" stroke-width="1.1" stroke-width="1.3"/><path d="M5 5 L7 7 M7 5 L5 7" stroke="#d6d6d6" fill="none" stroke-width="1.1"/></svg>
<svg class="a" style="left:19px;top:199.5px;" width="3" height="3" viewBox="0 0 3 3"><path d="M2.5 0.5 V2.5 H0.5Z" fill="#8a8a8a"/></svg>
<svg class="a" style="left:6.0px;top:209.0px;" width="12" height="12" viewBox="0 0 12 12"><path d="M11 1 L5 7" stroke="#d6d6d6" fill="none" stroke-width="1.1" stroke-width="1.4"/><path d="M4.5 7 Q2 7.5 2.5 9.5 Q2 11 0.5 11.5 Q4 12 5.5 10 Q6.5 8.5 5 7Z" fill="#d6d6d6"/></svg>
<svg class="a" style="left:19px;top:219px;" width="3" height="3" viewBox="0 0 3 3"><path d="M2.5 0.5 V2.5 H0.5Z" fill="#8a8a8a"/></svg>
<svg class="a" style="left:6.0px;top:227.5px;" width="12" height="12" viewBox="0 0 12 12"><circle cx="6" cy="3" r="2.2" fill="#d6d6d6"/><rect x="5" y="4" width="2" height="3" fill="#d6d6d6"/><rect x="1.5" y="7" width="9" height="2.5" fill="#d6d6d6"/><rect x="1.5" y="10.5" width="9" height="1" fill="#d6d6d6"/></svg>
<svg class="a" style="left:19px;top:237.5px;" width="3" height="3" viewBox="0 0 3 3"><path d="M2.5 0.5 V2.5 H0.5Z" fill="#8a8a8a"/></svg>
<svg class="a" style="left:6.0px;top:245.0px;" width="12" height="12" viewBox="0 0 12 12"><path d="M11 1 L5 7" stroke="#d6d6d6" fill="none" stroke-width="1.1" stroke-width="1.3"/><path d="M4.5 7 Q2 7.5 2.5 9.5 Q2 11 0.5 11.5 Q4 12 5.5 10Z" fill="#d6d6d6"/><path d="M1 3 Q3 1 6 2" stroke="#d6d6d6" fill="none" stroke-width="1.1"/><path d="M8 11 Q11 9 10 6" stroke="#d6d6d6" fill="none" stroke-width="1.1"/></svg>
<svg class="a" style="left:19px;top:255px;" width="3" height="3" viewBox="0 0 3 3"><path d="M2.5 0.5 V2.5 H0.5Z" fill="#8a8a8a"/></svg>
<svg class="a" style="left:6.0px;top:262.5px;" width="12" height="12" viewBox="0 0 12 12"><path d="M2 8 L7.5 2.5 L11 6 L6 11 H3.5Z" stroke="#d6d6d6" fill="none" stroke-width="1.1" stroke-width="1.2"/><path d="M7.5 2.5 L11 6 L9 8 L5.5 4.5Z" fill="#d6d6d6"/></svg>
<svg class="a" style="left:19px;top:272.5px;" width="3" height="3" viewBox="0 0 3 3"><path d="M2.5 0.5 V2.5 H0.5Z" fill="#8a8a8a"/></svg>
<svg class="a" style="left:6.0px;top:280.5px;" width="12" height="12" viewBox="0 0 12 12"><defs><linearGradient id="gg" x1="0" x2="1"><stop offset="0" stop-color="#444"/><stop offset="1" stop-color="#ddd"/></linearGradient></defs><rect x="1" y="1.5" width="10" height="9" fill="url(#gg)" stroke="#d6d6d6" stroke-width="1"/></svg>
<svg class="a" style="left:19px;top:290.5px;" width="3" height="3" viewBox="0 0 3 3"><path d="M2.5 0.5 V2.5 H0.5Z" fill="#8a8a8a"/></svg>
<svg class="a" style="left:6.0px;top:298.5px;" width="12" height="12" viewBox="0 0 12 12"><path d="M6 1 Q10 6.5 9.5 8.5 Q9 11.5 6 11.5 Q3 11.5 2.5 8.5 Q2 6.5 6 1Z" fill="#d6d6d6"/></svg>
<svg class="a" style="left:19px;top:308.5px;" width="3" height="3" viewBox="0 0 3 3"><path d="M2.5 0.5 V2.5 H0.5Z" fill="#8a8a8a"/></svg>
<svg class="a" style="left:6.0px;top:316.5px;" width="12" height="12" viewBox="0 0 12 12"><circle cx="7" cy="4.5" r="3.8" fill="#d6d6d6"/><path d="M4.5 7 L1 11" stroke="#d6d6d6" fill="none" stroke-width="1.1" stroke-width="1.6"/></svg>
<svg class="a" style="left:19px;top:326.5px;" width="3" height="3" viewBox="0 0 3 3"><path d="M2.5 0.5 V2.5 H0.5Z" fill="#8a8a8a"/></svg>
<svg class="a" style="left:6.0px;top:334.5px;" width="12" height="12" viewBox="0 0 12 12"><path d="M2 11 L3 6 L8 1 L11 4 L6 9Z" stroke="#d6d6d6" fill="none" stroke-width="1.1" stroke-width="1.2"/><circle cx="5.5" cy="6.5" r="1" fill="#d6d6d6"/></svg>
<svg class="a" style="left:19px;top:344.5px;" width="3" height="3" viewBox="0 0 3 3"><path d="M2.5 0.5 V2.5 H0.5Z" fill="#8a8a8a"/></svg>
<svg class="a" style="left:6.0px;top:352.5px;" width="12" height="12" viewBox="0 0 12 12"><path d="M1.5 1.5 H10.5 V3.5 M1.5 1.5 V3.5 M6 1.5 V11 M4 11 H8" stroke="#d6d6d6" fill="none" stroke-width="1.1" stroke-width="1.5"/></svg>
<svg class="a" style="left:19px;top:362.5px;" width="3" height="3" viewBox="0 0 3 3"><path d="M2.5 0.5 V2.5 H0.5Z" fill="#8a8a8a"/></svg>
<svg class="a" style="left:6.0px;top:370.5px;" width="12" height="12" viewBox="0 0 12 12"><path d="M2.5 0.5 V11.5 L5 9 L7.5 12 L9 11 L6.8 8 L10.5 8Z" fill="#d6d6d6"/></svg>
<svg class="a" style="left:19px;top:380.5px;" width="3" height="3" viewBox="0 0 3 3"><path d="M2.5 0.5 V2.5 H0.5Z" fill="#8a8a8a"/></svg>
<svg class="a" style="left:6.0px;top:388.5px;" width="12" height="12" viewBox="0 0 12 12"><rect x="1" y="2" width="10" height="8" stroke="#d6d6d6" fill="none" stroke-width="1.1" stroke-width="1.3"/></svg>
<svg class="a" style="left:19px;top:398.5px;" width="3" height="3" viewBox="0 0 3 3"><path d="M2.5 0.5 V2.5 H0.5Z" fill="#8a8a8a"/></svg>
<svg class="a" style="left:6.0px;top:406.5px;" width="12" height="12" viewBox="0 0 12 12"><path d="M3 11 Q1 8 1.5 6 L3 7 V2.5 Q4 1.5 5 2.5 V1.5 Q6 0.5 7 1.5 V2.5 Q8 1.8 9 2.8 V4 Q10 3.5 10.8 4.5 V8 Q10 11 7.5 11.5Z" fill="#d6d6d6"/></svg>
<svg class="a" style="left:19px;top:416.5px;" width="3" height="3" viewBox="0 0 3 3"><path d="M2.5 0.5 V2.5 H0.5Z" fill="#8a8a8a"/></svg>
<svg class="a" style="left:6.0px;top:424.5px;" width="12" height="12" viewBox="0 0 12 12"><circle cx="5" cy="5" r="3.6" stroke="#d6d6d6" fill="none" stroke-width="1.1" stroke-width="1.4"/><path d="M7.5 7.5 L11 11" stroke="#d6d6d6" fill="none" stroke-width="1.1" stroke-width="2"/></svg>
<svg class="a" style="left:19px;top:434.5px;" width="3" height="3" viewBox="0 0 3 3"><path d="M2.5 0.5 V2.5 H0.5Z" fill="#8a8a8a"/></svg>
<svg class="a" style="left:7.5px;top:447.5px;" width="10" height="4" viewBox="0 0 10 4"><circle cx="1.5" cy="2" r="1.4" fill="#d6d6d6"/><circle cx="5" cy="2" r="1.4" fill="#d6d6d6"/><circle cx="8.5" cy="2" r="1.4" fill="#d6d6d6"/></svg>
<svg class="a" style="left:19px;top:452px;" width="3" height="3" viewBox="0 0 3 3"><path d="M2.5 0.5 V2.5 H0.5Z" fill="#8a8a8a"/></svg>
<svg class="a" style="left:3px;top:462px;" width="7" height="8" viewBox="0 0 7 8"><rect x="2.5" y="3" width="4" height="4" fill="#eee"/><rect x="0.5" y="1" width="4" height="4" fill="#111" stroke="#eee" stroke-width="0.8"/></svg>
<svg class="a" style="left:13px;top:461px;" width="7" height="9" viewBox="0 0 7 9"><path d="M1 2 H5 V7" stroke="#d6d6d6" fill="none" stroke-width="1.1"/><path d="M0 2 L2 0.5 V3.5Z M5 9 L3.5 7 H6.5Z" fill="#d6d6d6"/></svg>
<div class="a" style="left:9px;top:480.5px;width:11.5px;height:12.5px;background:#f4f4f4;border:1px solid #8a8a8a"></div>
<div class="a" style="left:3px;top:473.5px;width:11.5px;height:12px;background:#ffffff;border:1px solid #9a9a9a"></div>
<svg class="a" style="left:6.5px;top:500.5px;" width="12" height="11" viewBox="0 0 12 11"><rect x="0.6" y="0.6" width="10.8" height="9.8" stroke="#bdbdbd" fill="none" stroke-width="0.9"/><circle cx="6" cy="5.5" r="2.6" stroke="#bdbdbd" fill="none" stroke-width="0.9"/></svg>
<svg class="a" style="left:6.5px;top:519px;" width="12" height="12" viewBox="0 0 12 12"><rect x="3.5" y="0.6" width="8" height="7" stroke="#c4c4c4" fill="none" stroke-width="0.9"/><rect x="0.6" y="3.6" width="8" height="7.5" fill="#535353" stroke="#c4c4c4" stroke-width="0.9"/></svg>
<div class="a" style="left:869px;top:41px;width:211px;height:8px;background:#3b3b3b;"></div>
<svg class="a" style="left:885px;top:42px;" width="6" height="5" viewBox="0 0 6 5"><path d="M2.5 0.5 L0.5 2.5 L2.5 4.5 M5 0.5 L3 2.5 L5 4.5" stroke="#bdbdbd" fill="none" stroke-width="1"/></svg>
<svg class="a" style="left:1066px;top:42px;" width="6" height="5" viewBox="0 0 6 5"><path d="M0.5 0.5 L2.5 2.5 L0.5 4.5 M3 0.5 L5 2.5 L3 4.5" stroke="#bdbdbd" fill="none" stroke-width="1"/></svg>
<div class="a" style="left:869px;top:49px;width:1px;height:671px;background:#3a3a3a;"></div>
<div class="a" style="left:870px;top:49px;width:25px;height:671px;background:#535353;"></div>
<div class="a" style="left:895px;top:49px;width:1px;height:671px;background:#3a3a3a;"></div>
<div class="a" style="left:872px;top:97px;width:21px;height:1px;background:#4a4a4a;"></div>
<div class="a" style="left:872px;top:145px;width:21px;height:1px;background:#4a4a4a;"></div>
<div class="a" style="left:872px;top:175px;width:21px;height:1px;background:#4a4a4a;"></div>
<div class="a" style="left:872px;top:203px;width:21px;height:1px;background:#4a4a4a;"></div>
<svg class="a" style="left:876px;top:59px;" width="14" height="13" viewBox="0 0 14 13"><path d="M0.5 0.8 H4.5 M0.5 3 H4.5 M0.5 5.2 H4.5 M0.5 7.4 H3" stroke="#d8d8d8" stroke-width="0.7"/><path d="M13 1.5 L7 8" stroke="#d8d8d8" fill="none" stroke-width="1.1" stroke-width="1.6"/><path d="M6.5 7.5 Q3.5 9 3 12.5 Q6.5 12.5 8 9.5Z" fill="#d8d8d8"/></svg>
<svg class="a" style="left:876px;top:79px;" width="14" height="12" viewBox="0 0 14 12"><ellipse cx="3.5" cy="2.5" rx="2.8" ry="2" fill="#d8d8d8"/><path d="M6 2.5 H13" stroke="#d8d8d8" fill="none" stroke-width="1.1" stroke-width="1.3"/><path d="M1 9 H7" stroke="#d8d8d8" fill="none" stroke-width="1.1" stroke-width="1.3"/><path d="M7 9 L12 5.5 V12Z" fill="#d8d8d8"/></svg>
<div class="t" style="left:878.5px;top:107.20px;font-size:11px;line-height:11px;color:#d8d8d8;font-weight:400;font-family:'Liberation Sans',sans-serif;transform:scale(1.089,1.000);transform-origin:0 0;">A</div>
<div class="a" style="left:887.5px;top:106.5px;width:1px;height:12px;background:#d8d8d8;"></div>
<svg class="a" style="left:879px;top:125px;" width="9" height="13" viewBox="0 0 9 13"><path d="M3.5 1 H8 M4.5 1 V12.5 M7 1 V12.5" stroke="#d8d8d8" fill="none" stroke-width="1.1" stroke-width="1.3"/><path d="M4.5 1 Q1 1 1 3.5 Q1 6 4.5 6Z" fill="#d8d8d8"/></svg>
<div class="t" style="left:877px;top:154.73px;font-size:13px;line-height:13px;color:#d8d8d8;font-weight:400;font-family:'Liberation Serif',sans-serif;transform:scale(1.065,1.000);transform-origin:0 0;font-style:italic;">A</div>
<svg class="a" style="left:877px;top:184px;" width="12" height="13" viewBox="0 0 12 13"><path d="M6 0.8 L11 3.5 V9.5 L6 12.2 L1 9.5 V3.5Z M1 3.5 L6 6.2 L11 3.5 M6 6.2 V12.2" stroke="#bdbdbd" fill="none" stroke-width="1.1"/></svg>
<div class="a" style="left:896px;top:49px;width:179px;height:337px;background:#535353;"></div>
<div class="a" style="left:896px;top:49px;width:179px;height:20px;background:#434343;"></div>
<div class="a" style="left:897px;top:49px;width:112px;height:20px;background:#484848;"></div>
<div class="t" style="left:901px;top:54.10px;font-size:8.5px;line-height:8.5px;color:#a9a9a9;font-weight:400;font-family:'Liberation Sans',sans-serif;transform:scale(0.734,1.000);transform-origin:0 0;">Swatc</div>
<div class="t" style="left:924px;top:54.10px;font-size:8.5px;line-height:8.5px;color:#a9a9a9;font-weight:400;font-family:'Liberation Sans',sans-serif;transform:scale(0.769,1.000);transform-origin:0 0;">Gradi</div>
<div class="t" style="left:947px;top:54.10px;font-size:8.5px;line-height:8.5px;color:#a9a9a9;font-weight:400;font-family:'Liberation Sans',sans-serif;transform:scale(0.749,1.000);transform-origin:0 0;">Patter</div>
<div class="t" style="left:969px;top:54.10px;font-size:8.5px;line-height:8.5px;color:#a9a9a9;font-weight:400;font-family:'Liberation Sans',sans-serif;transform:scale(0.811,1.000);transform-origin:0 0;">Histor</div>
<div class="t" style="left:992px;top:54.10px;font-size:8.5px;line-height:8.5px;color:#a9a9a9;font-weight:400;font-family:'Liberation Sans',sans-serif;transform:scale(0.736,1.000);transform-origin:0 0;">Actior</div>
<div class="a" style="left:1009px;top:49px;width:40px;height:20px;background:#535353;"></div>
<div class="t" style="left:1013px;top:54.10px;font-size:8.5px;line-height:8.5px;color:#f0f0f0;font-weight:700;font-family:'Liberation Sans',sans-serif;transform:scale(0.761,1.000);transform-origin:0 0;">Properties</div>
<svg class="a" style="left:1065px;top:55px;" width="8" height="7" viewBox="0 0 8 7"><path d="M0 1 H8 M0 3.5 H8 M0 6 H8" stroke="#c9c9c9" stroke-width="1.2"/></svg>
<div class="a" style="left:903px;top:74px;width:14px;height:14px;background:#3a3a3a;"></div>
<svg class="a" style="left:906px;top:76px;" width="8" height="10" viewBox="0 0 8 10"><path d="M0.6 0.6 H5 L7.4 3 V9.4 H0.6Z M5 0.6 V3 H7.4" stroke="#d8d8d8" fill="none" stroke-width="1.1" stroke-width="1"/></svg>
<div class="t" style="left:921px;top:77.40px;font-size:8.5px;line-height:8.5px;color:#d6d6d6;font-weight:400;font-family:'Liberation Sans',sans-serif;transform:scale(0.723,1.000);transform-origin:0 0;">Document</div>
<div class="a" style="left:896px;top:92px;width:170px;height:1px;background:#484848;"></div>
<div class="a" style="left:1066px;top:93px;width:9px;height:275px;background:#4a4a4a;"></div>
<div class="a" style="left:1067px;top:105px;width:7px;height:222px;background:#5c5c5c;"></div>
<svg class="a" style="left:1067px;top:96px;" width="7" height="5" viewBox="0 0 7 5"><path d="M1 4 L3.5 1.5 L6 4" stroke="#777" fill="none"/></svg>
<svg class="a" style="left:1067px;top:358px;" width="7" height="5" viewBox="0 0 7 5"><path d="M1 1 L3.5 3.5 L6 1" stroke="#777" fill="none"/></svg>
<svg class="a" style="left:900px;top:100px;" width="7" height="5" viewBox="0 0 7 5"><path d="M0.7 0.7 L3.5 3.8 L6.3 0.7" stroke="#9a9a9a" fill="none" stroke-width="1"/></svg>
<div class="t" style="left:910px;top:98.40px;font-size:8.5px;line-height:8.5px;color:#ededed;font-weight:700;font-family:'Liberation Sans',sans-serif;transform:scale(0.727,1.000);transform-origin:0 0;">Canvas</div>
<div class="t" style="left:928px;top:116.14px;font-size:8px;line-height:8px;color:#bdbdbd;font-weight:400;font-family:'Liberation Sans',sans-serif;transform:scale(0.793,1.000);transform-origin:0 0;">W</div>
<div class="a" style="left:939px;top:114px;width:31px;height:11px;background:#474747;"></div>
<div class="t" style="left:942px;top:115.64px;font-size:8px;line-height:8px;color:#e0e0e0;font-weight:400;font-family:'Liberation Sans',sans-serif;transform:scale(0.773,1.000);transform-origin:0 0;">2232 px</div>
<div class="t" style="left:981px;top:116.14px;font-size:8px;line-height:8px;color:#bdbdbd;font-weight:400;font-family:'Liberation Sans',sans-serif;transform:scale(0.936,1.000);transform-origin:0 0;">X</div>
<div class="a" style="left:988px;top:114px;width:33px;height:11px;background:#4d4d4d;"></div>
<div class="t" style="left:991px;top:115.64px;font-size:8px;line-height:8px;color:#6d6d6d;font-weight:400;font-family:'Liberation Sans',sans-serif;transform:scale(0.793,1.000);transform-origin:0 0;">0 px</div>
<div class="t" style="left:929px;top:133.64px;font-size:8px;line-height:8px;color:#bdbdbd;font-weight:400;font-family:'Liberation Sans',sans-serif;transform:scale(0.865,1.000);transform-origin:0 0;">H</div>
<div class="a" style="left:939px;top:132px;width:31px;height:11px;background:#474747;"></div>
<div class="t" style="left:942px;top:133.64px;font-size:8px;line-height:8px;color:#e0e0e0;font-weight:400;font-family:'Liberation Sans',sans-serif;transform:scale(0.773,1.000);transform-origin:0 0;">2854 px</div>
<div class="t" style="left:982px;top:133.64px;font-size:8px;line-height:8px;color:#bdbdbd;font-weight:400;font-family:'Liberation Sans',sans-serif;transform:scale(0.936,1.000);transform-origin:0 0;">Y</div>
<div class="a" style="left:988px;top:132px;width:33px;height:11px;background:#4d4d4d;"></div>
<div class="t" style="left:991px;top:133.64px;font-size:8px;line-height:8px;color:#6d6d6d;font-weight:400;font-family:'Liberation Sans',sans-serif;transform:scale(0.793,1.000);transform-origin:0 0;">0 px</div>
<svg class="a" style="left:906px;top:122px;" width="6" height="12" viewBox="0 0 6 12"><circle cx="3" cy="3" r="2.2" stroke="#d8d8d8" fill="none" stroke-width="1.1" stroke-width="1.2"/><circle cx="3" cy="9" r="2.2" stroke="#d8d8d8" fill="none" stroke-width="1.1" stroke-width="1.2"/></svg>
<div class="a" style="left:939px;top:152px;width:14px;height:15px;background:#393939;"></div>
<svg class="a" style="left:941px;top:154px;" width="10" height="11" viewBox="0 0 10 11"><rect x="0.6" y="0.6" width="8.8" height="9.8" stroke="#d8d8d8" fill="none" stroke-width="1.1" stroke-width="0.9"/><circle cx="5" cy="3.5" r="1.4" fill="#d8d8d8"/><rect x="3" y="5.5" width="4" height="4" fill="#d8d8d8"/></svg>
<svg class="a" style="left:956px;top:155px;" width="13" height="10" viewBox="0 0 13 10"><rect x="0.6" y="0.6" width="11.8" height="8.8" stroke="#d8d8d8" fill="none" stroke-width="1.1" stroke-width="0.9"/><circle cx="6.5" cy="3.3" r="1.4" fill="#d8d8d8"/><rect x="4.5" y="5" width="4" height="3.5" fill="#d8d8d8"/></svg>
<div class="t" style="left:938px;top:176.44px;font-size:8px;line-height:8px;color:#cfcfcf;font-weight:400;font-family:'Liberation Sans',sans-serif;transform:scale(0.778,1.000);transform-origin:0 0;">Resolution: 250 pixels/inch</div>
<div class="t" style="left:918px;top:193.44px;font-size:8px;line-height:8px;color:#bdbdbd;font-weight:400;font-family:'Liberation Sans',sans-serif;transform:scale(0.749,1.000);transform-origin:0 0;">Mode</div>
<div class="a" style="left:939px;top:191px;width:82px;height:14px;background:#474747;"></div>
<div class="t" style="left:943px;top:194.14px;font-size:8px;line-height:8px;color:#dedede;font-weight:400;font-family:'Liberation Sans',sans-serif;transform:scale(0.698,1.000);transform-origin:0 0;">RGB Color</div>
<svg class="a" style="left:1013px;top:196.5px;" width="6" height="4" viewBox="0 0 6 4"><path d="M0.5 0.5 L3 3 L5.5 0.5" stroke="#bdbdbd" fill="none" stroke-width="1"/></svg>
<div class="a" style="left:939px;top:208px;width:82px;height:14px;background:#474747;"></div>
<div class="t" style="left:943px;top:211.14px;font-size:8px;line-height:8px;color:#dedede;font-weight:400;font-family:'Liberation Sans',sans-serif;transform:scale(0.726,1.000);transform-origin:0 0;">16 Bits/Channel</div>
<svg class="a" style="left:1013px;top:213.5px;" width="6" height="4" viewBox="0 0 6 4"><path d="M0.5 0.5 L3 3 L5.5 0.5" stroke="#bdbdbd" fill="none" stroke-width="1"/></svg>
<div class="t" style="left:926px;top:230.14px;font-size:8px;line-height:8px;color:#9d9d9d;font-weight:400;font-family:'Liberation Sans',sans-serif;transform:scale(0.685,1.000);transform-origin:0 0;">Fill</div>
<div class="a" style="left:939px;top:228px;width:11px;height:12px;background:#4d4d4d;border:1px solid #5e5e5e"></div>
<div class="a" style="left:953px;top:227px;width:68px;height:14px;background:#474747;"></div>
<div class="t" style="left:957px;top:230.14px;font-size:8px;line-height:8px;color:#dedede;font-weight:400;font-family:'Liberation Sans',sans-serif;transform:scale(0.770,1.000);transform-origin:0 0;">Transparent</div>
<svg class="a" style="left:1013px;top:232.5px;" width="6" height="4" viewBox="0 0 6 4"><path d="M0.5 0.5 L3 3 L5.5 0.5" stroke="#bdbdbd" fill="none" stroke-width="1"/></svg>
<div class="a" style="left:896px;top:248px;width:170px;height:1px;background:#484848;"></div>
<svg class="a" style="left:900px;top:255px;" width="7" height="5" viewBox="0 0 7 5"><path d="M0.7 0.7 L3.5 3.8 L6.3 0.7" stroke="#9a9a9a" fill="none" stroke-width="1"/></svg>
<div class="t" style="left:911px;top:253.70px;font-size:8.5px;line-height:8.5px;color:#ededed;font-weight:700;font-family:'Liberation Sans',sans-serif;transform:scale(0.739,1.000);transform-origin:0 0;">Rulers &amp; Grids</div>
<div class="a" style="left:903px;top:270px;width:15px;height:16px;background:#393939;"></div>
<svg class="a" style="left:905px;top:272px;" width="11" height="12" viewBox="0 0 11 12"><path d="M1.5 11 V1.5 H10" stroke="#d8d8d8" stroke-width="2.4" fill="none"/><path d="M4 4 H10" stroke="#393939" stroke-width="0.5"/></svg>
<svg class="a" style="left:925px;top:271px;" width="12" height="13" viewBox="0 0 12 13"><rect x="0.6" y="0.6" width="10.8" height="11.8" stroke="#d8d8d8" fill="none" stroke-width="1.1" stroke-width="0.9"/><path d="M4.3 0.6 V12.4 M7.8 0.6 V12.4 M0.6 4.5 H11.4 M0.6 8.5 H11.4" stroke="#d8d8d8" fill="none" stroke-width="1.1" stroke-width="0.9"/></svg>
<svg class="a" style="left:946px;top:271px;" width="12" height="13" viewBox="0 0 12 13"><rect x="0.6" y="0.6" width="10.8" height="11.8" stroke="#d8d8d8" fill="none" stroke-width="1.1" stroke-width="0.9" stroke-dasharray="1.5 1"/><rect x="2.5" y="2.5" width="7" height="8" stroke="#aaa" fill="none" stroke-width="0.6" stroke-dasharray="1 1"/></svg>
<div class="a" style="left:975px;top:272px;width:46px;height:14px;background:#474747;"></div>
<div class="t" style="left:979px;top:275.14px;font-size:8px;line-height:8px;color:#dedede;font-weight:400;font-family:'Liberation Sans',sans-serif;transform:scale(0.796,1.000);transform-origin:0 0;">Pixels</div>
<svg class="a" style="left:1013px;top:277.5px;" width="6" height="4" viewBox="0 0 6 4"><path d="M0.5 0.5 L3 3 L5.5 0.5" stroke="#bdbdbd" fill="none" stroke-width="1"/></svg>
<div class="a" style="left:896px;top:294px;width:170px;height:1px;background:#484848;"></div>
<svg class="a" style="left:900px;top:302px;" width="7" height="5" viewBox="0 0 7 5"><path d="M0.7 0.7 L3.5 3.8 L6.3 0.7" stroke="#9a9a9a" fill="none" stroke-width="1"/></svg>
<div class="t" style="left:910px;top:300.90px;font-size:8.5px;line-height:8.5px;color:#ededed;font-weight:700;font-family:'Liberation Sans',sans-serif;transform:scale(0.764,1.000);transform-origin:0 0;">Guides</div>
<div class="a" style="left:903px;top:317px;width:15px;height:16px;background:#393939;"></div>
<svg class="a" style="left:905px;top:319px;" width="11" height="12" viewBox="0 0 11 12"><path d="M3.5 0 V12 M0 4 H11 M0 8 H11" stroke="#d8d8d8" fill="none" stroke-width="1.1" stroke-width="1.1"/></svg>
<svg class="a" style="left:925px;top:318px;" width="13" height="14" viewBox="0 0 13 14"><path d="M3 0 V13 M6 0 V13 M0 4 H9 M0 8 H7" stroke="#d8d8d8" fill="none" stroke-width="1.1" stroke-width="1"/><rect x="8" y="8.5" width="4.5" height="4" fill="#d8d8d8"/></svg>
<div class="a" style="left:944px;top:317px;width:15px;height:16px;background:#393939;"></div>
<svg class="a" style="left:946px;top:319px;" width="12" height="12" viewBox="0 0 12 12"><path d="M2.5 0 V12 M0 3 H5 M5 1 L7.5 3 L5 5" stroke="#d8d8d8" fill="none" stroke-width="1.1" stroke-width="1"/><rect x="7.5" y="7" width="3.5" height="4" fill="#d8d8d8"/><path d="M9.2 5 V7" stroke="#d8d8d8" fill="none" stroke-width="1.1"/></svg>
<div class="a" style="left:975px;top:319px;width:46px;height:14px;background:#474747;"></div>
<svg class="a" style="left:1013px;top:324.5px;" width="6" height="4" viewBox="0 0 6 4"><path d="M0.5 0.5 L3 3 L5.5 0.5" stroke="#bdbdbd" fill="none" stroke-width="1"/></svg>
<div class="a" style="left:980px;top:325.5px;width:28px;height:1.5px;background:#d6d6d6;"></div>
<div class="a" style="left:896px;top:342px;width:170px;height:1px;background:#484848;"></div>
<svg class="a" style="left:900px;top:349px;" width="7" height="5" viewBox="0 0 7 5"><path d="M0.7 0.7 L3.5 3.8 L6.3 0.7" stroke="#9a9a9a" fill="none" stroke-width="1"/></svg>
<div class="t" style="left:911px;top:348.10px;font-size:8.5px;line-height:8.5px;color:#ededed;font-weight:700;font-family:'Liberation Sans',sans-serif;transform:scale(0.739,1.000);transform-origin:0 0;">Quick Actions</div>
<div class="a" style="left:1075px;top:41px;width:2px;height:679px;background:#3b3b3b;"></div>
<div class="a" style="left:1077px;top:41px;width:3px;height:679px;background:#505050;"></div>
<div class="a" style="left:896px;top:386px;width:179px;height:1px;background:#3a3a3a;"></div>
<div class="a" style="left:896px;top:387px;width:179px;height:333px;background:#535353;"></div>
<div class="a" style="left:896px;top:387px;width:179px;height:19px;background:#434343;"></div>
<div class="a" style="left:896px;top:387px;width:30px;height:19px;background:#535353;"></div>
<div class="t" style="left:901px;top:392.50px;font-size:8.5px;line-height:8.5px;color:#f0f0f0;font-weight:700;font-family:'Liberation Sans',sans-serif;transform:scale(0.583,1.000);transform-origin:0 0;">Layers</div>
<svg class="a" style="left:1065px;top:394px;" width="8" height="7" viewBox="0 0 8 7"><path d="M0 1 H8 M0 3.5 H8 M0 6 H8" stroke="#c9c9c9" stroke-width="1.2"/></svg>
<div class="a" style="left:899px;top:413px;width:53px;height:14px;background:#3f3f3f;"></div>
<svg class="a" style="left:903px;top:415px;" width="8" height="9" viewBox="0 0 8 9"><circle cx="3.3" cy="3.3" r="2.4" stroke="#d8d8d8" fill="none" stroke-width="1.1" stroke-width="1.4"/><path d="M5 5 L7.5 8" stroke="#d8d8d8" fill="none" stroke-width="1.1" stroke-width="1.6"/></svg>
<div class="t" style="left:913px;top:416.14px;font-size:8px;line-height:8px;color:#dedede;font-weight:400;font-family:'Liberation Sans',sans-serif;transform:scale(0.874,1.000);transform-origin:0 0;">Kind</div>
<svg class="a" style="left:945px;top:418px;" width="6" height="4" viewBox="0 0 6 4"><path d="M0.5 0.5 L3 3 L5.5 0.5" stroke="#bdbdbd" fill="none" stroke-width="1"/></svg>
<svg class="a" style="left:958px;top:415px;" width="11" height="10" viewBox="0 0 11 10"><rect x="0.6" y="0.6" width="9.8" height="8.8" stroke="#d8d8d8" fill="none" stroke-width="1.1" stroke-width="1"/><path d="M2 8 L4.5 4.5 L6.5 6.5 L8 5 L9 8Z" fill="#d8d8d8"/></svg>
<svg class="a" style="left:973px;top:415px;" width="10" height="10" viewBox="0 0 10 10"><circle cx="5" cy="5" r="4.2" stroke="#d8d8d8" fill="none" stroke-width="1.1" stroke-width="1.2"/><path d="M5 0.8 A4.2 4.2 0 0 1 5 9.2Z" fill="#d8d8d8" transform="rotate(45 5 5)"/></svg>
<div class="t" style="left:989px;top:414.70px;font-size:11px;line-height:11px;color:#d8d8d8;font-weight:400;font-family:'Liberation Serif',sans-serif;transform:scale(1.336,1.000);transform-origin:0 0;">T</div>
<svg class="a" style="left:1004px;top:415px;" width="11" height="11" viewBox="0 0 11 11"><rect x="2" y="2" width="7" height="7" stroke="#d8d8d8" fill="none" stroke-width="1.1" stroke-width="1"/><rect x="0.5" y="0.5" width="2.5" height="2.5" fill="#d8d8d8"/><rect x="8" y="0.5" width="2.5" height="2.5" fill="#d8d8d8"/><rect x="0.5" y="8" width="2.5" height="2.5" fill="#d8d8d8"/><rect x="8" y="8" width="2.5" height="2.5" fill="#d8d8d8"/></svg>
<svg class="a" style="left:1019px;top:414px;" width="10" height="12" viewBox="0 0 10 12"><path d="M1 0.6 H6 L9 3.5 V11.4 H1Z" stroke="#d8d8d8" fill="none" stroke-width="1.1" stroke-width="1"/><rect x="1" y="6" width="5" height="5.5" fill="#d8d8d8"/></svg>
<svg class="a" style="left:1033px;top:410px;" width="9" height="16" viewBox="0 0 9 16"><circle cx="4.5" cy="4.5" r="3.8" fill="#eaeaea"/><rect x="3" y="8" width="3" height="6" fill="#444"/></svg>
<div class="a" style="left:896px;top:428px;width:179px;height:1px;background:#4a4a4a;"></div>
<div class="a" style="left:899px;top:432px;width:80px;height:13px;background:#4e4e4e;"></div>
<div class="t" style="left:903px;top:434.64px;font-size:8px;line-height:8px;color:#767676;font-weight:400;font-family:'Liberation Sans',sans-serif;transform:scale(0.776,1.000);transform-origin:0 0;">Normal</div>
<div class="t" style="left:983px;top:434.64px;font-size:8px;line-height:8px;color:#767676;font-weight:400;font-family:'Liberation Sans',sans-serif;transform:scale(0.750,1.000);transform-origin:0 0;">Opacity:</div>
<div class="a" style="left:1010px;top:432px;width:20px;height:13px;background:#4a4a4a;"></div>
<div class="t" style="left:1012px;top:434.88px;font-size:7.5px;line-height:7.5px;color:#6a6a6a;font-weight:400;font-family:'Liberation Sans',sans-serif;transform:scale(0.730,1.000);transform-origin:0 0;">100%</div>
<div class="a" style="left:1033px;top:432px;width:6px;height:13px;background:#4e4e4e;"></div>
<div class="a" style="left:896px;top:447px;width:179px;height:1px;background:#4a4a4a;"></div>
<div class="t" style="left:899px;top:454.94px;font-size:8px;line-height:8px;color:#7d7d7d;font-weight:400;font-family:'Liberation Sans',sans-serif;transform:scale(0.784,1.000);transform-origin:0 0;">Lock:</div>
<svg class="a" style="left:918px;top:452.5px;" width="10" height="11" viewBox="0 0 10 11"><rect x="0.5" y="0.5" width="9" height="10" stroke="#a0a0a0" fill="none"/><rect x="0.5" y="0.5" width="3" height="3" fill="#a0a0a0"/><rect x="6.5" y="0.5" width="3" height="3" fill="#a0a0a0"/><rect x="3.5" y="3.5" width="3" height="3" fill="#a0a0a0"/><rect x="0.5" y="6.5" width="3" height="3" fill="#a0a0a0"/><rect x="6.5" y="6.5" width="3" height="3" fill="#a0a0a0"/></svg>
<svg class="a" style="left:932px;top:452.5px;" width="10" height="12" viewBox="0 0 10 12"><path d="M9.5 0.5 L4 7" stroke="#a0a0a0" stroke-width="1.4"/><path d="M3.5 6.5 Q1 8 0.5 11.5 Q4 11 4.8 8Z" fill="#a0a0a0"/></svg>
<svg class="a" style="left:946px;top:452.5px;" width="11" height="12" viewBox="0 0 11 12"><path d="M5.5 0 V12 M0 6 H11" stroke="#a0a0a0" stroke-width="1"/><path d="M5.5 0 L4 2 H7Z M5.5 12 L4 10 H7Z M0 6 L2 4.5 V7.5Z M11 6 L9 4.5 V7.5Z" fill="#a0a0a0"/></svg>
<svg class="a" style="left:960px;top:452.5px;" width="11" height="11" viewBox="0 0 11 11"><path d="M0.5 3 H8 V10.5 M3 0.5 V8 H10.5" stroke="#a0a0a0" fill="none"/></svg>
<svg class="a" style="left:975px;top:451.5px;" width="9" height="12" viewBox="0 0 9 12"><path d="M2 5 V3 Q4.5 0 7 3 V5" stroke="#a0a0a0" fill="none" stroke-width="1.2"/><rect x="0.5" y="5" width="8" height="6.5" fill="#a0a0a0"/></svg>
<div class="t" style="left:997px;top:454.94px;font-size:8px;line-height:8px;color:#767676;font-weight:400;font-family:'Liberation Sans',sans-serif;transform:scale(0.723,1.000);transform-origin:0 0;">Fill:</div>
<div class="a" style="left:1010px;top:452.5px;width:20px;height:13px;background:#4a4a4a;"></div>
<div class="t" style="left:1012px;top:455.38px;font-size:7.5px;line-height:7.5px;color:#6a6a6a;font-weight:400;font-family:'Liberation Sans',sans-serif;transform:scale(0.730,1.000);transform-origin:0 0;">100%</div>
<div class="a" style="left:1033px;top:452.5px;width:6px;height:13px;background:#4e4e4e;"></div>
<div class="a" style="left:896px;top:466px;width:170px;height:1px;background:#474747;"></div>
<div class="a" style="left:914px;top:467px;width:1px;height:238px;background:#4c4c4c;"></div>
<div class="a" style="left:896px;top:485.4px;width:170px;height:1px;background:#4b4b4b;"></div>
<svg class="a" style="left:900.5px;top:474.90000000000003px;" width="10" height="7" viewBox="0 0 10 7"><path d="M0.3 3.5 Q5 -1.8 9.7 3.5 Q5 8.8 0.3 3.5Z" fill="#a9a9a9"/><circle cx="5" cy="3.5" r="1.5" fill="#5a5a5a"/></svg>
<svg class="a" style="left:928px;top:476.40000000000003px;" width="6" height="4" viewBox="0 0 6 4"><path d="M0.5 0.5 L3 3 L5.5 0.5" stroke="#bdbdbd" fill="none" stroke-width="1"/></svg>
<svg class="a" style="left:935px;top:473.40000000000003px;" width="10" height="9" viewBox="0 0 10 9"><path d="M0 1.5 H4 L5 2.5 H10 V9 H0Z" fill="#e6e6e6"/><rect x="0.8" y="3.5" width="8.4" height="0.8" fill="#535353"/></svg>
<div class="t" style="left:951px;top:474.01px;font-size:8px;line-height:8px;color:#e0e0e0;font-weight:400;font-family:'Liberation Sans',sans-serif;transform:scale(0.770,1.000);transform-origin:0 0;">edite text</div>
<div class="a" style="left:896px;top:514.1px;width:170px;height:1px;background:#4b4b4b;"></div>
<svg class="a" style="left:900.5px;top:497.54999999999995px;" width="10" height="7" viewBox="0 0 10 7"><path d="M0.3 3.5 Q5 -1.8 9.7 3.5 Q5 8.8 0.3 3.5Z" fill="#a9a9a9"/><circle cx="5" cy="3.5" r="1.5" fill="#5a5a5a"/></svg>
<div class="t" style="left:942.5px;top:494.36px;font-size:14.5px;line-height:14.5px;color:#e4e4e4;font-weight:400;font-family:'Liberation Serif',sans-serif;transform:scale(1.129,1.000);transform-origin:0 0;-webkit-text-stroke:0;">T</div>
<div class="t" style="left:963px;top:496.56px;font-size:8px;line-height:8px;color:#e0e0e0;font-weight:400;font-family:'Liberation Sans',sans-serif;transform:scale(0.749,1.000);transform-origin:0 0;">Layer 2</div>
<div class="a" style="left:896px;top:542.8000000000001px;width:170px;height:1px;background:#4b4b4b;"></div>
<svg class="a" style="left:900.5px;top:526.25px;" width="10" height="7" viewBox="0 0 10 7"><path d="M0.3 3.5 Q5 -1.8 9.7 3.5 Q5 8.8 0.3 3.5Z" fill="#a9a9a9"/><circle cx="5" cy="3.5" r="1.5" fill="#5a5a5a"/></svg>
<div class="a" style="left:938px;top:519.25px;width:15px;height:21px;background:conic-gradient(#d6d6d6 0 25%,#fff 0 50%,#d6d6d6 0 75%,#fff 0) 0 0/4px 4px;border:1px solid #ddd"></div>
<div class="a" style="left:939.5px;top:520.75px;width:4px;height:4px;background:#c9a5a0;"></div>
<div class="t" style="left:959px;top:525.26px;font-size:8px;line-height:8px;color:#e0e0e0;font-weight:400;font-family:'Liberation Sans',sans-serif;transform:scale(0.787,1.000);transform-origin:0 0;">Layer 3</div>
<div class="a" style="left:896px;top:571.5px;width:170px;height:1px;background:#4b4b4b;"></div>
<svg class="a" style="left:900.5px;top:554.95px;" width="10" height="7" viewBox="0 0 10 7"><path d="M0.3 3.5 Q5 -1.8 9.7 3.5 Q5 8.8 0.3 3.5Z" fill="#a9a9a9"/><circle cx="5" cy="3.5" r="1.5" fill="#5a5a5a"/></svg>
<div class="t" style="left:942.5px;top:551.76px;font-size:14.5px;line-height:14.5px;color:#e4e4e4;font-weight:400;font-family:'Liberation Serif',sans-serif;transform:scale(1.129,1.000);transform-origin:0 0;-webkit-text-stroke:0;">T</div>
<div class="t" style="left:963px;top:553.96px;font-size:8px;line-height:8px;color:#e0e0e0;font-weight:400;font-family:'Liberation Sans',sans-serif;transform:scale(0.776,1.000);transform-origin:0 0;">citta0000000...&lt;&lt;&lt;&lt;&lt;&lt;&lt;&lt;&lt;0 d</div>
<div class="a" style="left:896px;top:600.2px;width:170px;height:1px;background:#4b4b4b;"></div>
<svg class="a" style="left:902px;top:582.15px;" width="8" height="10" viewBox="0 0 8 10"><path d="M1 9 V3 L4 1 H7 V9Z" stroke="#626262" fill="none" stroke-width="0.8"/></svg>
<div class="t" style="left:942.5px;top:580.46px;font-size:14.5px;line-height:14.5px;color:#e4e4e4;font-weight:400;font-family:'Liberation Serif',sans-serif;transform:scale(1.129,1.000);transform-origin:0 0;-webkit-text-stroke:0;">T</div>
<div class="t" style="left:962px;top:582.66px;font-size:8px;line-height:8px;color:#e0e0e0;font-weight:400;font-family:'Liberation Sans',sans-serif;transform:scale(0.674,1.000);transform-origin:0 0;">1aa</div>
<div class="a" style="left:896px;top:628.9000000000001px;width:170px;height:1px;background:#4b4b4b;"></div>
<svg class="a" style="left:900.5px;top:612.35px;" width="10" height="7" viewBox="0 0 10 7"><path d="M0.3 3.5 Q5 -1.8 9.7 3.5 Q5 8.8 0.3 3.5Z" fill="#a9a9a9"/><circle cx="5" cy="3.5" r="1.5" fill="#5a5a5a"/></svg>
<div class="t" style="left:942.5px;top:609.16px;font-size:14.5px;line-height:14.5px;color:#e4e4e4;font-weight:400;font-family:'Liberation Serif',sans-serif;transform:scale(1.129,1.000);transform-origin:0 0;-webkit-text-stroke:0;">T</div>
<div class="t" style="left:962px;top:611.36px;font-size:8px;line-height:8px;color:#e0e0e0;font-weight:400;font-family:'Liberation Sans',sans-serif;transform:scale(0.674,1.000);transform-origin:0 0;">169</div>
<div class="a" style="left:896px;top:657.6px;width:170px;height:1px;background:#4b4b4b;"></div>
<svg class="a" style="left:900.5px;top:641.05px;" width="10" height="7" viewBox="0 0 10 7"><path d="M0.3 3.5 Q5 -1.8 9.7 3.5 Q5 8.8 0.3 3.5Z" fill="#a9a9a9"/><circle cx="5" cy="3.5" r="1.5" fill="#5a5a5a"/></svg>
<div class="t" style="left:942.5px;top:637.86px;font-size:14.5px;line-height:14.5px;color:#e4e4e4;font-weight:400;font-family:'Liberation Serif',sans-serif;transform:scale(1.129,1.000);transform-origin:0 0;-webkit-text-stroke:0;">T</div>
<div class="t" style="left:962px;top:640.06px;font-size:8px;line-height:8px;color:#e0e0e0;font-weight:400;font-family:'Liberation Sans',sans-serif;transform:scale(0.899,1.000);transform-origin:0 0;">m</div>
<div class="a" style="left:896px;top:686.3000000000001px;width:170px;height:1px;background:#4b4b4b;"></div>
<svg class="a" style="left:900.5px;top:669.75px;" width="10" height="7" viewBox="0 0 10 7"><path d="M0.3 3.5 Q5 -1.8 9.7 3.5 Q5 8.8 0.3 3.5Z" fill="#a9a9a9"/><circle cx="5" cy="3.5" r="1.5" fill="#5a5a5a"/></svg>
<div class="t" style="left:942.5px;top:666.56px;font-size:14.5px;line-height:14.5px;color:#e4e4e4;font-weight:400;font-family:'Liberation Serif',sans-serif;transform:scale(1.129,1.000);transform-origin:0 0;-webkit-text-stroke:0;">T</div>
<div class="t" style="left:962px;top:668.76px;font-size:8px;line-height:8px;color:#e0e0e0;font-weight:400;font-family:'Liberation Sans',sans-serif;transform:scale(0.712,1.000);transform-origin:0 0;">129 1 a</div>
<svg class="a" style="left:900.5px;top:698.45px;" width="10" height="7" viewBox="0 0 10 7"><path d="M0.3 3.5 Q5 -1.8 9.7 3.5 Q5 8.8 0.3 3.5Z" fill="#a9a9a9"/><circle cx="5" cy="3.5" r="1.5" fill="#5a5a5a"/></svg>
<div class="t" style="left:942.5px;top:695.26px;font-size:14.5px;line-height:14.5px;color:#e4e4e4;font-weight:400;font-family:'Liberation Serif',sans-serif;transform:scale(1.129,1.000);transform-origin:0 0;-webkit-text-stroke:0;">T</div>
<div class="t" style="left:962px;top:697.46px;font-size:8px;line-height:8px;color:#e0e0e0;font-weight:400;font-family:'Liberation Sans',sans-serif;transform:scale(0.724,1.000);transform-origin:0 0;">01.01.1990</div>
<div class="a" style="left:1066px;top:467px;width:9px;height:238px;background:#4a4a4a;"></div>
<div class="a" style="left:1067px;top:490px;width:7px;height:66px;background:#5c5c5c;"></div>
<svg class="a" style="left:1067px;top:470px;" width="7" height="5" viewBox="0 0 7 5"><path d="M1 4 L3.5 1.5 L6 4" stroke="#777" fill="none"/></svg>
<svg class="a" style="left:1067px;top:696px;" width="7" height="5" viewBox="0 0 7 5"><path d="M1 1 L3.5 3.5 L6 1" stroke="#777" fill="none"/></svg>
<div class="a" style="left:896px;top:705px;width:179px;height:15px;background:#535353;"></div>
<div class="a" style="left:896px;top:705px;width:179px;height:1px;background:#474747;"></div>
<svg class="a" style="left:947px;top:711px;" width="11" height="6" viewBox="0 0 11 6"><ellipse cx="3" cy="3" rx="2.5" ry="2" stroke="#8c8c8c" fill="none"/><ellipse cx="8" cy="3" rx="2.5" ry="2" stroke="#8c8c8c" fill="none"/></svg>
<div class="t" style="left:967px;top:709.66px;font-size:9px;line-height:9px;color:#8c8c8c;font-weight:400;font-family:'Liberation Serif',sans-serif;transform:scale(0.933,1.000);transform-origin:0 0;font-style:italic;-webkit-text-stroke:0;">fx</div>
<svg class="a" style="left:982px;top:710px;" width="10" height="9" viewBox="0 0 10 9"><rect x="0.5" y="0.5" width="9" height="8" fill="#c4c4c4"/><circle cx="5" cy="4.5" r="2.3" fill="#666"/></svg>
<svg class="a" style="left:1000px;top:709px;" width="9" height="10" viewBox="0 0 9 10"><circle cx="4.5" cy="5" r="3.8" stroke="#c4c4c4" fill="none" stroke-width="1.1"/><path d="M4.5 1.2 A3.8 3.8 0 0 1 4.5 8.8Z" fill="#c4c4c4" transform="rotate(45 4.5 5)"/></svg>
<svg class="a" style="left:1016px;top:709px;" width="10" height="9" viewBox="0 0 10 9"><path d="M0.5 1.5 H3.8 L4.8 2.5 H9.5 V8.5 H0.5Z" fill="#c4c4c4"/></svg>
<svg class="a" style="left:1034px;top:708px;" width="8" height="11" viewBox="0 0 8 11"><rect x="0.5" y="0.5" width="7" height="10" stroke="#c4c4c4" fill="none"/><path d="M4 3.5 V7.5 M2 5.5 H6" stroke="#c4c4c4"/></svg>
<svg class="a" style="left:1050px;top:708px;" width="9" height="11" viewBox="0 0 9 11"><path d="M0.5 2 H8.5 M3 2 V0.6 H6 V2 M1.5 2.5 V10.4 H7.5 V2.5" stroke="#8c8c8c" fill="none"/><path d="M3.5 4 V9 M5.5 4 V9" stroke="#8c8c8c" stroke-width="0.8"/></svg>
</body></html>
